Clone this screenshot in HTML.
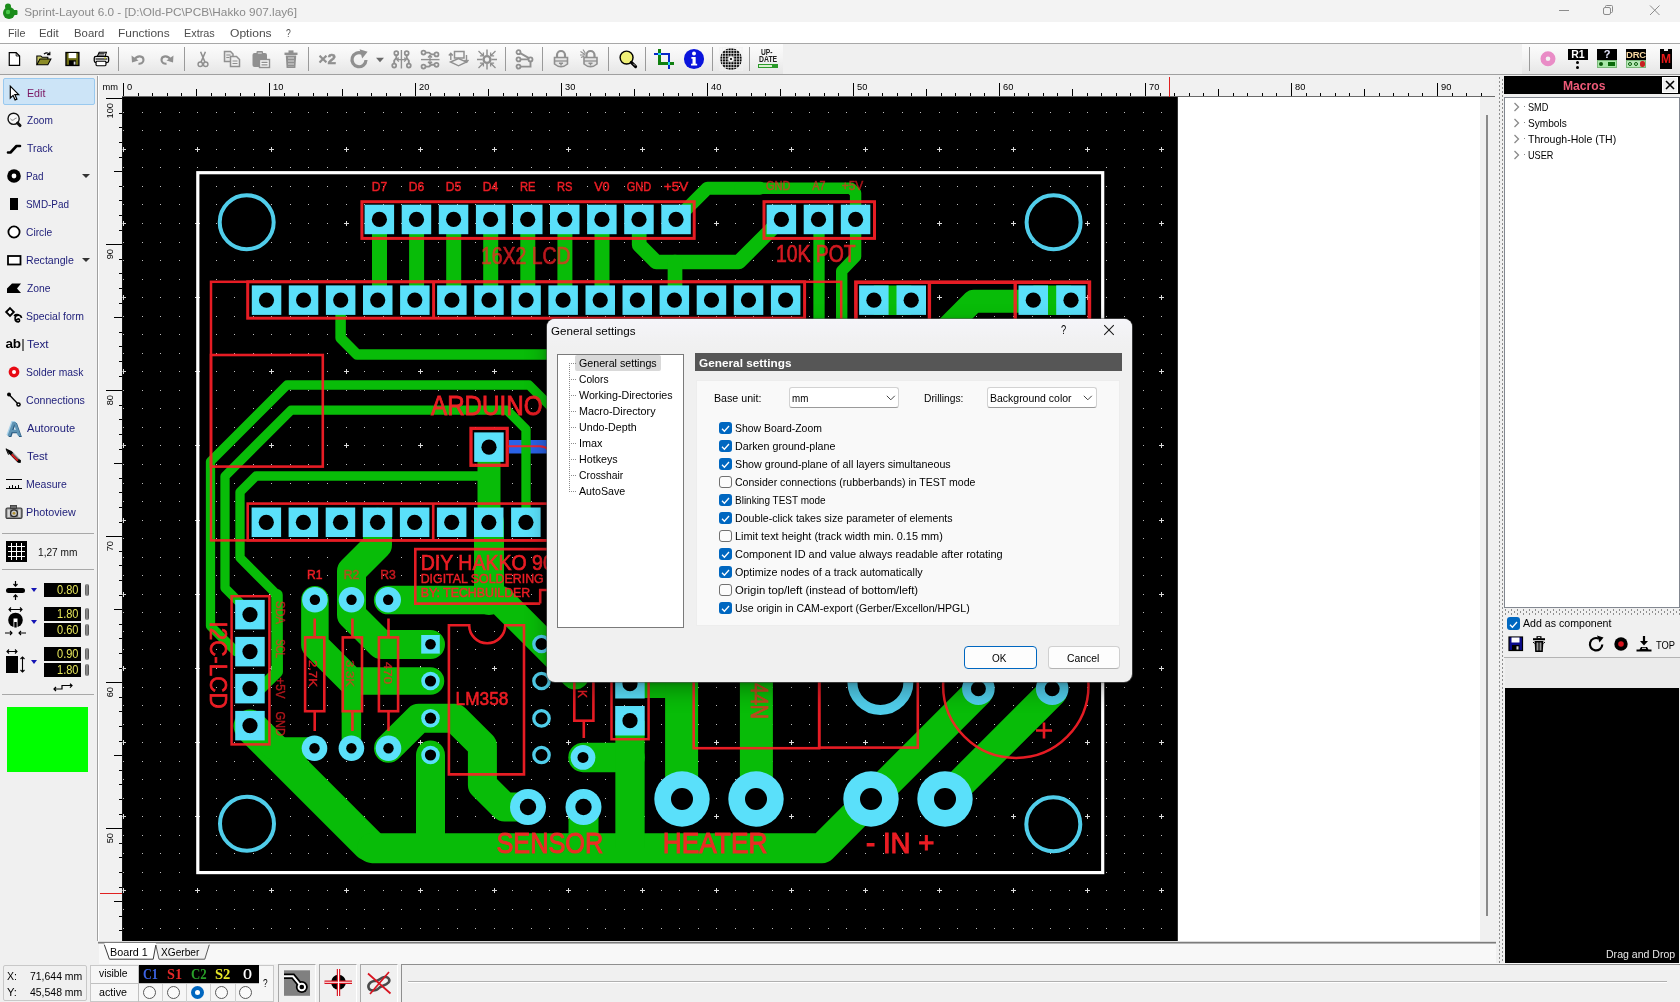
<!DOCTYPE html>
<html><head><meta charset="utf-8"><title>Sprint-Layout</title><style>
html,body{margin:0;padding:0}
body{width:1680px;height:1002px;overflow:hidden;background:#f0f0f0;font-family:"Liberation Sans",sans-serif;position:relative}
.mi{position:absolute;top:25px;font-size:12.4px;color:#505050;line-height:16px;white-space:nowrap}
.li{position:absolute;left:26px;font-size:12px;line-height:16px;white-space:nowrap}
.rl{position:absolute;font-size:9.3px;color:#000;line-height:12px;white-space:nowrap}
.rv{transform-origin:0 0;transform:rotate(-90deg) translate(-100%,0)}
.st{position:absolute;font-size:12px;color:#000;line-height:14px;white-space:nowrap}
.dt{position:absolute;color:#000;line-height:14px;white-space:nowrap}
</style></head><body>
<div id="root" style="position:absolute;left:0;top:0;width:1680px;height:1002px;will-change:transform">
<div style="position:absolute;left:0;top:0;width:1680px;height:22px;background:#f3f3f3"></div>
<div style="position:absolute;left:1px;top:2px;width:18px;height:18px"><svg width="18" height="18" viewBox="0 0 18 18" ><circle cx="8" cy="11" r="6" fill="#1a8c1a"/><circle cx="7" cy="4.5" r="3" fill="#1a8c1a"/><rect x="11" y="8" width="5.5" height="5" rx="1" fill="#1a8c1a"/><circle cx="7" cy="10" r="2.2" fill="#48c848"/></svg></div>
<div style="position:absolute;top:4.5px;font-size:11.8px;line-height:15px;color:#8a8a8a;white-space:nowrap;left:24.2px;">Sprint-Layout 6.0 - [D:\Old-PC\PCB\Hakko 907.lay6]</div>
<svg width="120" height="22" style="position:absolute;left:1555px;top:0" fill="none" stroke="#8c8c8c" stroke-width="1">
<path d="M4 10.5 H14"/>
<rect x="48.5" y="7.5" width="7" height="7" rx="1.5"/><path d="M50.5 7.5 V6.5 Q50.5 5.5 51.5 5.5 H56.5 Q57.5 5.5 57.5 6.5 V11.5 Q57.5 12.5 56.5 12.5 H55.5"/>
<path d="M95 5.5 L104.5 15 M104.5 5.5 L95 15"/>
</svg>
<div style="position:absolute;left:0;top:22px;width:1680px;height:22px;background:#fff"></div>
<div style="position:absolute;top:25.1px;font-size:11.7px;line-height:15px;color:#4e4e4e;white-space:nowrap;left:7.8px;transform:scaleX(0.9230);transform-origin:0 50%;">File</div>
<div style="position:absolute;top:25.1px;font-size:11.7px;line-height:15px;color:#4e4e4e;white-space:nowrap;left:39.3px;transform:scaleX(0.9722);transform-origin:0 50%;">Edit</div>
<div style="position:absolute;top:25.1px;font-size:11.7px;line-height:15px;color:#4e4e4e;white-space:nowrap;left:73.5px;transform:scaleX(0.9706);transform-origin:0 50%;">Board</div>
<div style="position:absolute;top:25.1px;font-size:11.7px;line-height:15px;color:#4e4e4e;white-space:nowrap;left:118.3px;transform:scaleX(1.0193);transform-origin:0 50%;">Functions</div>
<div style="position:absolute;top:25.1px;font-size:11.7px;line-height:15px;color:#4e4e4e;white-space:nowrap;left:184.2px;transform:scaleX(0.9289);transform-origin:0 50%;">Extras</div>
<div style="position:absolute;top:25.1px;font-size:11.7px;line-height:15px;color:#4e4e4e;white-space:nowrap;left:229.5px;transform:scaleX(1.0342);transform-origin:0 50%;">Options</div>
<div style="position:absolute;top:25.1px;font-size:11.7px;line-height:15px;color:#4e4e4e;white-space:nowrap;left:285.6px;transform:scaleX(0.7377);transform-origin:0 50%;">?</div>
<div style="position:absolute;left:0;top:43px;width:1680px;height:1px;background:#a8a8a8"></div>
<div style="position:absolute;left:0;top:44px;width:1680px;height:30px;background:#f0f0f0"></div>
<div style="position:absolute;left:0;top:44px;width:783px;height:30px;background:linear-gradient(#fcfcfc,#f4f4f4 45%,#e6e6e6)"></div>
<div style="position:absolute;left:1522px;top:44px;width:158px;height:30px;background:linear-gradient(#fcfcfc,#f4f4f4 45%,#e6e6e6)"></div>
<div style="position:absolute;left:0;top:74px;width:1680px;height:1px;background:#a0a0a0"></div>
<div style="position:absolute;left:118px;top:47px;width:1px;height:24px;background:#9a9a9a"></div>
<div style="position:absolute;left:184px;top:47px;width:1px;height:24px;background:#9a9a9a"></div>
<div style="position:absolute;left:308px;top:47px;width:1px;height:24px;background:#9a9a9a"></div>
<div style="position:absolute;left:505px;top:47px;width:1px;height:24px;background:#9a9a9a"></div>
<div style="position:absolute;left:542px;top:47px;width:1px;height:24px;background:#9a9a9a"></div>
<div style="position:absolute;left:608px;top:47px;width:1px;height:24px;background:#9a9a9a"></div>
<div style="position:absolute;left:645px;top:47px;width:1px;height:24px;background:#9a9a9a"></div>
<div style="position:absolute;left:712px;top:47px;width:1px;height:24px;background:#9a9a9a"></div>
<div style="position:absolute;left:749px;top:47px;width:1px;height:24px;background:#9a9a9a"></div>
<div style="position:absolute;left:1529px;top:47px;width:1px;height:24px;background:#9a9a9a"></div>
<div style="position:absolute;left:2px;top:46.5px;width:24px;height:24px;transform:scale(0.86)"><svg width="24" height="24" viewBox="0 0 24 24" ><path d="M6.5 4.5 H14.5 L18.5 8.5 V19.5 H6.5 Z" fill="#fff" stroke="#000" stroke-width="1.4"/><path d="M14.5 4.5 V8.5 H18.5" fill="none" stroke="#000" stroke-width="1"/></svg></div>
<div style="position:absolute;left:31px;top:46.5px;width:24px;height:24px;transform:scale(0.88)"><svg width="24" height="24" viewBox="0 0 24 24" ><path d="M5 18.5 V8.5 H9.5 L11 10 H17.5 V12" fill="#c8c864" stroke="#000" stroke-width="1.2"/><path d="M5 18.5 L8.5 12 H21 L17.5 18.5 Z" fill="#8c8c28" stroke="#000" stroke-width="1.2"/><path d="M13 6.5 Q16.5 3.5 19.5 6.5 M19.8 3.8 V7 H16.6" fill="none" stroke="#000" stroke-width="1.2"/></svg></div>
<div style="position:absolute;left:60px;top:46.5px;width:24px;height:24px;transform:scale(0.86)"><svg width="24" height="24" viewBox="0 0 24 24" ><rect x="5" y="4.5" width="15" height="15" fill="#6c6c14" stroke="#000" stroke-width="1.6"/><rect x="8" y="5" width="9" height="6" fill="#fff"/><rect x="8.5" y="13.5" width="8" height="6" fill="#000"/><rect x="14" y="15" width="2" height="3.5" fill="#d8d8d8"/></svg></div>
<div style="position:absolute;left:89px;top:46.5px;width:24px;height:24px;transform:scale(0.9)"><svg width="24" height="24" viewBox="0 0 24 24" ><path d="M8 9 L10 4.5 H18 L16.5 9" fill="#fff" stroke="#000" stroke-width="1.2"/><path d="M9.5 6 H16 M9 7.6 H15.5" stroke="#000" stroke-width="0.9"/><rect x="4.5" y="9" width="16" height="7" rx="2" fill="#e8e8e8" stroke="#000" stroke-width="1.4"/><path d="M6 12 H19" stroke="#000" stroke-width="1.2"/><rect x="6.5" y="14.5" width="11" height="5" rx="1" fill="#fff" stroke="#000" stroke-width="1.3"/><rect x="15.5" y="10.3" width="2" height="1.2" fill="#c8c800"/></svg></div>
<div style="position:absolute;left:126px;top:46.5px;width:24px;height:24px;transform:scale(1)"><svg width="24" height="24" viewBox="0 0 24 24" ><path d="M8.5 12.5 C11 8 17.5 8.5 17.5 13 C17.5 16 14.5 17 12.5 16.6" fill="none" stroke="#909090" stroke-width="2.1"/><path d="M5.5 8.5 L6 15.5 L12.5 13.5 Z" fill="#909090"/></svg></div>
<div style="position:absolute;left:155px;top:46.5px;width:24px;height:24px;transform:scale(1)"><svg width="24" height="24" viewBox="0 0 24 24" ><path d="M15.5 12.5 C13 8 6.5 8.5 6.5 13 C6.5 16 9.5 17 11.5 16.6" fill="none" stroke="#909090" stroke-width="2.1"/><path d="M18.5 8.5 L18 15.5 L11.5 13.5 Z" fill="#909090"/></svg></div>
<div style="position:absolute;left:191px;top:46.5px;width:24px;height:24px;transform:scale(0.9)"><svg width="24" height="24" viewBox="0 0 24 24" ><path d="M9.3 4 L14.2 15.5 M14.7 4 L9.8 15.5" stroke="#909090" stroke-width="1.7" fill="none"/><circle cx="9" cy="17.8" r="2.5" fill="none" stroke="#909090" stroke-width="1.6"/><circle cx="15" cy="17.8" r="2.5" fill="none" stroke="#909090" stroke-width="1.6"/></svg></div>
<div style="position:absolute;left:220px;top:46.5px;width:24px;height:24px;transform:scale(1)"><svg width="24" height="24" viewBox="0 0 24 24" ><path d="M4.5 4.5 H10.5 L13 7 V14.5 H4.5 Z" fill="#e8e8e8" stroke="#909090" stroke-width="1.5"/><path d="M10.5 9.5 H16.5 L19.5 12.5 V19.5 H10.5 Z" fill="#efefef" stroke="#909090" stroke-width="1.5"/><path d="M6.3 8 H10.5 M6.3 10.5 H9.5 M12.5 14 H17.5 M12.5 16.5 H17.5" stroke="#909090" stroke-width="1.2"/></svg></div>
<div style="position:absolute;left:249px;top:46.5px;width:24px;height:24px;transform:scale(1)"><svg width="24" height="24" viewBox="0 0 24 24" ><rect x="3.5" y="6" width="14.5" height="14" rx="2" fill="#909090"/><rect x="7.5" y="4" width="6.5" height="3.6" rx="1" fill="#909090"/><rect x="8.8" y="5.6" width="4" height="1" fill="#e8e8e8"/><rect x="10.5" y="12.5" width="10" height="8" fill="#f4f4f4" stroke="#909090" stroke-width="1.4"/><path d="M12.5 15.3 H18.5 M12.5 17.8 H18.5" stroke="#909090" stroke-width="1.2"/></svg></div>
<div style="position:absolute;left:279px;top:46.5px;width:24px;height:24px;transform:scale(1)"><svg width="24" height="24" viewBox="0 0 24 24" ><path d="M6.8 8.5 H17.2 L16.4 21 H7.6 Z" fill="#909090"/><rect x="5.5" y="5.6" width="13" height="2.4" fill="#909090"/><rect x="9.5" y="3.4" width="5" height="2.6" fill="#909090"/><path d="M10 10 V19.5 M12 10 V19.5 M14 10 V19.5" stroke="#e4e4e4" stroke-width="0.9" stroke-dasharray="2 1"/></svg></div>
<div style="position:absolute;left:315px;top:46.5px;width:24px;height:24px;transform:scale(1)"><svg width="24" height="24" viewBox="0 0 24 24" ><text x="12.3" y="17.2" text-anchor="middle" font-family="Liberation Sans, sans-serif" font-weight="bold" font-size="15.5" fill="#909090" stroke="#909090" stroke-width="0.5" textLength="17.5" lengthAdjust="spacingAndGlyphs">&#215;2</text></svg></div>
<div style="position:absolute;left:347px;top:46.5px;width:24px;height:24px;transform:scale(1)"><svg width="24" height="24" viewBox="0 0 24 24" ><path d="M19 13 A7 7 0 1 1 15 6.4" fill="none" stroke="#909090" stroke-width="3.2"/><path d="M12.6 2.2 L20.6 4.8 L15.2 11.4 Z" fill="#909090"/></svg></div>
<div style="position:absolute;left:368px;top:46.5px;width:24px;height:24px;transform:scale(1)"><svg width="24" height="24" viewBox="0 0 24 24" ><path d="M8 10.8 H16 L12 15.2 Z" fill="#6a6a6a"/></svg></div>
<div style="position:absolute;left:389px;top:46.5px;width:24px;height:24px;transform:scale(1)"><svg width="24" height="24" viewBox="0 0 24 24" ><path d="M12.4 3 V21.5" stroke="#909090" stroke-width="1.4"/><circle cx="7.3" cy="6.2" r="2" fill="none" stroke="#909090" stroke-width="1.7"/><circle cx="5.2" cy="18.6" r="2" fill="none" stroke="#909090" stroke-width="1.7"/><path d="M7.3 8.2 V11 L5.2 13.5 V16.6" fill="none" stroke="#909090" stroke-width="1.9"/><circle cx="17.7" cy="6.2" r="2" fill="none" stroke="#909090" stroke-width="1.7"/><circle cx="19.8" cy="18.6" r="2" fill="none" stroke="#909090" stroke-width="1.7"/><path d="M17.7 8.2 V11 L19.8 13.5 V16.6" fill="none" stroke="#909090" stroke-width="1.9"/><path d="M8 12.6 H17 M9.8 10.6 L7.8 12.6 L9.8 14.6 M15.2 10.6 L17.2 12.6 L15.2 14.6" fill="none" stroke="#909090" stroke-width="1.3"/></svg></div>
<div style="position:absolute;left:418px;top:46.5px;width:24px;height:24px;transform:scale(1)"><svg width="24" height="24" viewBox="0 0 24 24" ><path d="M3 12.6 H21.5" stroke="#909090" stroke-width="1.4"/><circle cx="5.5" cy="5.6" r="2" fill="none" stroke="#909090" stroke-width="1.7"/><circle cx="18.5" cy="7.4" r="2" fill="none" stroke="#909090" stroke-width="1.7"/><path d="M7.5 5.6 H11 L13.5 7.4 H16.5" fill="none" stroke="#909090" stroke-width="1.9"/><circle cx="5.5" cy="19.6" r="2" fill="none" stroke="#909090" stroke-width="1.7"/><circle cx="18.5" cy="17.8" r="2" fill="none" stroke="#909090" stroke-width="1.7"/><path d="M7.5 19.6 H11 L13.5 17.8 H16.5" fill="none" stroke="#909090" stroke-width="1.9"/><path d="M12 8.5 V16.8 M10 10.5 L12 8.3 L14 10.5 M10 14.8 L12 17 L14 14.8" fill="none" stroke="#909090" stroke-width="1.3"/></svg></div>
<div style="position:absolute;left:446px;top:46.5px;width:24px;height:24px;transform:scale(1)"><svg width="24" height="24" viewBox="0 0 24 24" ><rect x="8.5" y="4.5" width="9.5" height="6.5" fill="none" stroke="#909090" stroke-width="1.5"/><path d="M4.5 15 L12.5 11.5 L20.5 15 L12.5 18.8 Z" fill="none" stroke="#909090" stroke-width="1.4"/><path d="M4.8 6.5 V13 M2.8 8.5 L4.8 6.3 L6.8 8.5 M20.5 8 V15 M18.5 13 L20.5 15.2 L22.5 13" fill="none" stroke="#909090" stroke-width="1.4"/></svg></div>
<div style="position:absolute;left:475px;top:46.5px;width:24px;height:24px;transform:scale(1)"><svg width="24" height="24" viewBox="0 0 24 24" ><circle cx="12" cy="12.5" r="3.4" fill="none" stroke="#909090" stroke-width="2.4"/><path d="M12 2.5 V8 M12 17 V22.5 M2 12.5 H7.5 M16.5 12.5 H22" stroke="#909090" stroke-width="1.5"/><path d="M3.5 4 L8.2 8.7 M8.4 5.4 V8.9 H4.9 M20.5 4 L15.8 8.7 M15.6 5.4 V8.9 H19.1 M3.5 21 L8.2 16.3 M4.9 16.1 H8.4 V19.6 M20.5 21 L15.8 16.3 M19.1 16.1 H15.6 V19.6" fill="none" stroke="#909090" stroke-width="1.3"/></svg></div>
<div style="position:absolute;left:512px;top:46.5px;width:24px;height:24px;transform:scale(1)"><svg width="24" height="24" viewBox="0 0 24 24" ><circle cx="6.5" cy="5.2" r="2" fill="none" stroke="#909090" stroke-width="1.8"/><circle cx="6.5" cy="12.4" r="2" fill="none" stroke="#909090" stroke-width="1.8"/><circle cx="6.5" cy="19.6" r="2" fill="none" stroke="#909090" stroke-width="1.8"/><circle cx="18.5" cy="12.4" r="2" fill="none" stroke="#909090" stroke-width="1.8"/><path d="M8.5 12.4 H16.5 M8.2 6.2 L17 11.2 M8.5 19.6 H18.5 V14.4" fill="none" stroke="#909090" stroke-width="1.9"/></svg></div>
<div style="position:absolute;left:549px;top:46.5px;width:24px;height:24px;transform:scale(1)"><svg width="24" height="24" viewBox="0 0 24 24" ><path d="M8 10.5 V8 A4 4 0 0 1 16 8 V10.5" fill="none" stroke="#909090" stroke-width="2.2"/><path d="M5.5 10.5 H18.5 V17 Q12 22.5 5.5 17 Z" fill="#e4e4e4" stroke="#909090" stroke-width="1.6"/><path d="M5.5 14 H18.5" stroke="#909090" stroke-width="1.3"/><path d="M10 16.2 H14 M12 16.2 V18.6" stroke="#909090" stroke-width="1.5"/></svg></div>
<div style="position:absolute;left:578px;top:46.5px;width:24px;height:24px;transform:scale(1)"><svg width="24" height="24" viewBox="0 0 24 24" ><path d="M8.5 10.5 V8 A4 4 0 0 1 16.5 8 V10.5" fill="none" stroke="#909090" stroke-width="2.2"/><path d="M6 10.5 H19 V17 Q12.5 22.5 6 17 Z" fill="#e4e4e4" stroke="#909090" stroke-width="1.6"/><path d="M6 14 H19" stroke="#909090" stroke-width="1.3"/><path d="M10.5 16.2 H14.5 M12.5 16.2 V18.6" stroke="#909090" stroke-width="1.5"/><path d="M2.5 4.5 L7 7.5 M2 8 H6.5 M5 2.5 L7.5 6.5 M3 10.5 L6.5 9" stroke="#909090" stroke-width="1.1"/></svg></div>
<div style="position:absolute;left:616px;top:46.5px;width:24px;height:24px;transform:scale(0.95)"><svg width="24" height="24" viewBox="0 0 24 24" ><circle cx="10.5" cy="10.5" r="6.8" fill="#f0f078" stroke="#000" stroke-width="1.5"/><path d="M15.5 15.5 L20 20" stroke="#000" stroke-width="3.2" stroke-linecap="round"/><path d="M17.5 17 L19.5 19" stroke="#fff" stroke-width="0.8"/></svg></div>
<div style="position:absolute;left:652px;top:46.5px;width:24px;height:24px;transform:scale(1.07)"><svg width="24" height="24" viewBox="0 0 24 24" shape-rendering="crispEdges"><path d="M8 2.5 V16 H21" fill="none" stroke="#108010" stroke-width="2.4"/><path d="M3 7.5 H16.5 V21.5" fill="none" stroke="#0828c8" stroke-width="2.4"/><rect x="6.8" y="6.3" width="2.4" height="2.4" fill="#28d8f8"/><rect x="15.3" y="14.8" width="2.4" height="2.4" fill="#28d8f8"/></svg></div>
<div style="position:absolute;left:682px;top:46.5px;width:24px;height:24px;transform:scale(1.05)"><svg width="24" height="24" viewBox="0 0 24 24" ><circle cx="12" cy="12" r="9.6" fill="#0a14dc"/><circle cx="12" cy="6.8" r="1.9" fill="#fff"/><path d="M9.5 10 H13.6 V16.5 H15 V18.2 H9.2 V16.5 H10.6 V11.7 H9.5 Z" fill="#fff"/></svg></div>
<div style="position:absolute;left:719px;top:46.5px;width:24px;height:24px;transform:scale(1.08)"><svg width="24" height="24" viewBox="0 0 24 24" ><circle cx="12" cy="12" r="10" fill="#000"/><path d="M1.6 1 V23 M1 1.6 H23" stroke="#f0f0f0" stroke-width="0.7"/><path d="M4.2 1 V23 M1 4.2 H23" stroke="#f0f0f0" stroke-width="0.7"/><path d="M6.8 1 V23 M1 6.8 H23" stroke="#f0f0f0" stroke-width="0.7"/><path d="M9.4 1 V23 M1 9.4 H23" stroke="#f0f0f0" stroke-width="0.7"/><path d="M12.0 1 V23 M1 12.0 H23" stroke="#f0f0f0" stroke-width="0.7"/><path d="M14.6 1 V23 M1 14.6 H23" stroke="#f0f0f0" stroke-width="0.7"/><path d="M17.2 1 V23 M1 17.2 H23" stroke="#f0f0f0" stroke-width="0.7"/><path d="M19.8 1 V23 M1 19.8 H23" stroke="#f0f0f0" stroke-width="0.7"/><path d="M22.4 1 V23 M1 22.4 H23" stroke="#f0f0f0" stroke-width="0.7"/><circle cx="12" cy="12" r="2.6" fill="#f0f0f0"/><circle cx="12" cy="12" r="1" fill="#000"/></svg></div>
<div style="position:absolute;left:756px;top:46.5px;width:24px;height:24px;transform:scale(1)"><div style="position:relative;width:24px;height:24px"><div style="position:absolute;left:5.3px;top:1.2px;font:bold 8.6px 'Liberation Sans',sans-serif;line-height:9px;color:#222;transform:scaleX(0.78);transform-origin:0 0;white-space:nowrap">UP-</div><div style="position:absolute;left:2.6px;top:8.2px;font:bold 8.6px 'Liberation Sans',sans-serif;line-height:9px;color:#222;transform:scaleX(0.80);transform-origin:0 0;white-space:nowrap">DATE</div><div style="position:absolute;left:1.7px;top:17.4px;width:20.4px;height:4.4px;background:#2a9a2a"></div><div style="position:absolute;left:3px;top:18.5px;width:13px;height:2.2px;background:#d8f0d0"></div></div></div>
<div style="position:absolute;left:1536px;top:46.5px;width:24px;height:24px;transform:scale(1)"><svg width="24" height="24" viewBox="0 0 24 24" ><circle cx="12" cy="11.8" r="4.9" fill="none" stroke="#e98cc6" stroke-width="5.2"/></svg></div>
<div style="position:absolute;left:1566px;top:46.5px;width:24px;height:24px;transform:scale(1)"><div style="position:relative;width:24px;height:24px"><div style="position:absolute;left:2px;top:2px;width:20px;height:11px;background:#000;color:#fff;font:bold 10.5px 'Liberation Sans',sans-serif;line-height:11px;text-align:center">R1</div><div style="position:absolute;left:10px;top:14px;width:3px;height:3px;border-radius:50%;background:#000"></div><div style="position:absolute;left:10px;top:19px;width:3px;height:3px;border-radius:50%;background:#000"></div></div></div>
<div style="position:absolute;left:1595px;top:46.5px;width:24px;height:24px;transform:scale(1)"><div style="position:relative;width:24px;height:24px"><div style="position:absolute;left:2px;top:2px;width:20px;height:11px;background:#000;color:#e8e8ff;font:bold 11px 'Liberation Sans',sans-serif;line-height:11px;text-align:center">?</div><div style="position:absolute;left:2px;top:13px;width:20px;height:8px;background:#a8e8a8;box-sizing:border-box;border:1px solid #7ab87a"></div><div style="position:absolute;left:4px;top:15px;width:4px;height:4px;border-radius:50%;background:#0a5a0a"></div><div style="position:absolute;left:13px;top:15px;width:7px;height:4px;background:#0a6a0a"></div></div></div>
<div style="position:absolute;left:1624px;top:46.5px;width:24px;height:24px;transform:scale(1)"><div style="position:relative;width:24px;height:24px"><div style="position:absolute;left:2px;top:2px;width:20px;height:11px;background:#000;color:#f8d8a0;font:bold 9.5px 'Liberation Sans',sans-serif;line-height:11px;text-align:center;letter-spacing:-0.2px">DRC</div><div style="position:absolute;left:2px;top:13px;width:20px;height:8px;background:#b8eab8;box-sizing:border-box;border:1px solid #7ab87a"></div><div style="position:absolute;left:4px;top:15px;width:4px;height:4px;border-radius:50%;border:1px solid #0a5a0a;box-sizing:border-box"></div><div style="position:absolute;left:10px;top:15px;width:4px;height:4px;border-radius:50%;border:1px solid #0a5a0a;box-sizing:border-box"></div><div style="position:absolute;left:16px;top:14px;width:5px;height:6px;background:#c82020;border-radius:2px"></div></div></div>
<div style="position:absolute;left:1655px;top:46.5px;width:24px;height:24px;transform:scale(1)"><div style="position:relative;width:24px;height:24px"><div style="position:absolute;left:5px;top:2px;width:12px;height:20px;background:#000;color:#e81818;font:bold 12px 'Liberation Sans',sans-serif;line-height:21px;text-align:center">M</div><div style="position:absolute;left:9px;top:2px;width:4px;height:2px;background:#f0f0f0"></div></div></div>
<div style="position:absolute;left:0;top:75px;width:97px;height:889px;background:#f0f0f0"></div>
<div style="position:absolute;left:97px;top:76px;width:1px;height:865px;background:#a0a0a0"></div>
<div style="position:absolute;left:98px;top:75px;width:1px;height:866px;background:#fff"></div>
<div style="position:absolute;left:3px;top:78px;width:92px;height:27px;background:#cce4f7;border:1px solid #99c9ef;border-radius:2px;box-sizing:border-box"></div>
<div style="position:absolute;top:85.6px;font-size:11.8px;line-height:15px;color:#7a1460;white-space:nowrap;left:26.7px;transform:scaleX(0.9049);transform-origin:0 50%;">Edit</div>
<div style="position:absolute;left:4px;top:82px;width:20px;height:20px"><svg width="20" height="20" viewBox="0 0 20 20" ><path d="M6.3 4.2 V16 L9.1 13.4 L11.1 17.9 L12.9 17.1 L10.9 12.7 H14.7 Z" fill="#fff" stroke="#000" stroke-width="1.2" stroke-linejoin="miter"/></svg></div>
<div style="position:absolute;top:112.6px;font-size:11.8px;line-height:15px;color:#1c1c78;white-space:nowrap;left:26.8px;transform:scaleX(0.8554);transform-origin:0 50%;">Zoom</div>
<div style="position:absolute;left:4px;top:110px;width:20px;height:20px"><svg width="20" height="20" viewBox="0 0 20 20" ><circle cx="9.6" cy="8.8" r="5.6" fill="#f8f8f8" stroke="#111" stroke-width="1.4"/><path d="M6.4 8.8 Q8 11.4 9.6 9.8 T12.6 8" fill="none" stroke="#888" stroke-width="1"/><path d="M13.6 13 L16 15.6" stroke="#111" stroke-width="3" stroke-linecap="round"/></svg></div>
<div style="position:absolute;top:140.6px;font-size:11.8px;line-height:15px;color:#1c1c78;white-space:nowrap;left:26.8px;transform:scaleX(0.8878);transform-origin:0 50%;">Track</div>
<div style="position:absolute;left:4px;top:138px;width:20px;height:20px"><svg width="20" height="20" viewBox="0 0 20 20" ><path d="M4 14.5 H6.5 L12.5 8 H16" fill="none" stroke="#000" stroke-width="2.6" stroke-linecap="round" stroke-linejoin="round"/></svg></div>
<div style="position:absolute;top:168.6px;font-size:11.8px;line-height:15px;color:#1c1c78;white-space:nowrap;left:26.4px;transform:scaleX(0.8383);transform-origin:0 50%;">Pad</div>
<div style="position:absolute;left:4px;top:166px;width:20px;height:20px"><svg width="20" height="20" viewBox="0 0 20 20" ><circle cx="10" cy="10" r="6.8" fill="#000"/><circle cx="10" cy="10" r="2.4" fill="#fff"/></svg></div>
<div style="position:absolute;top:196.6px;font-size:11.8px;line-height:15px;color:#1c1c78;white-space:nowrap;left:26.4px;transform:scaleX(0.8407);transform-origin:0 50%;">SMD-Pad</div>
<div style="position:absolute;left:4px;top:194px;width:20px;height:20px"><svg width="20" height="20" viewBox="0 0 20 20" ><rect x="6" y="4" width="8" height="12" fill="#000"/></svg></div>
<div style="position:absolute;top:224.6px;font-size:11.8px;line-height:15px;color:#1c1c78;white-space:nowrap;left:26.4px;transform:scaleX(0.8688);transform-origin:0 50%;">Circle</div>
<div style="position:absolute;left:4px;top:222px;width:20px;height:20px"><svg width="20" height="20" viewBox="0 0 20 20" ><circle cx="10" cy="10" r="5.6" fill="#fff" stroke="#000" stroke-width="1.8"/></svg></div>
<div style="position:absolute;top:252.6px;font-size:11.8px;line-height:15px;color:#1c1c78;white-space:nowrap;left:26.4px;transform:scaleX(0.9015);transform-origin:0 50%;">Rectangle</div>
<div style="position:absolute;left:4px;top:250px;width:20px;height:20px"><svg width="20" height="20" viewBox="0 0 20 20" ><rect x="4" y="6" width="12.5" height="8.5" fill="#fff" stroke="#000" stroke-width="1.8"/></svg></div>
<div style="position:absolute;top:280.6px;font-size:11.8px;line-height:15px;color:#1c1c78;white-space:nowrap;left:26.8px;transform:scaleX(0.8738);transform-origin:0 50%;">Zone</div>
<div style="position:absolute;left:4px;top:278px;width:20px;height:20px"><svg width="20" height="20" viewBox="0 0 20 20" ><path d="M3 15 V10.5 L8 5.5 H17 L13 10.5 L17 15 Z" fill="#000"/></svg></div>
<div style="position:absolute;top:308.6px;font-size:11.8px;line-height:15px;color:#1c1c78;white-space:nowrap;left:26.4px;transform:scaleX(0.8845);transform-origin:0 50%;">Special form</div>
<div style="position:absolute;left:4px;top:306px;width:20px;height:20px"><svg width="20" height="20" viewBox="0 0 20 20" ><path d="M6 2.2 L9.8 6 L6 9.8 L2.2 6 Z" fill="#fff" stroke="#000" stroke-width="1.9"/><path d="M12.6 14.6 A1.5 1.5 0 1 1 14.4 15.9 A3.3 3.3 0 1 1 17.6 12 A4.6 4.6 0 0 0 10 9.8" fill="none" stroke="#000" stroke-width="1.6"/></svg></div>
<div style="position:absolute;top:336.6px;font-size:11.8px;line-height:15px;color:#1c1c78;white-space:nowrap;left:27.0px;">Text</div>
<div style="position:absolute;left:4px;top:334px;width:20px;height:20px"><div style="position:absolute;left:1.5px;top:1px;font:bold 13.5px 'Liberation Sans',sans-serif;color:#000;line-height:18px;white-space:nowrap;letter-spacing:-0.3px">ab<span style="font-weight:normal;margin-left:0.5px">|</span></div></div>
<div style="position:absolute;top:364.6px;font-size:11.8px;line-height:15px;color:#1c1c78;white-space:nowrap;left:26.4px;transform:scaleX(0.8738);transform-origin:0 50%;">Solder mask</div>
<div style="position:absolute;left:4px;top:362px;width:20px;height:20px"><svg width="20" height="20" viewBox="0 0 20 20" ><circle cx="10" cy="10" r="5.4" fill="#e80a14"/><circle cx="10" cy="10" r="2" fill="#fff"/></svg></div>
<div style="position:absolute;top:392.6px;font-size:11.8px;line-height:15px;color:#1c1c78;white-space:nowrap;left:26.4px;transform:scaleX(0.8980);transform-origin:0 50%;">Connections</div>
<div style="position:absolute;left:4px;top:390px;width:20px;height:20px"><svg width="20" height="20" viewBox="0 0 20 20" ><path d="M5 4.5 L14.5 14.5" stroke="#000" stroke-width="1.3"/><circle cx="5" cy="4.5" r="2" fill="#000"/><circle cx="14.5" cy="14.5" r="2.3" fill="#000"/><circle cx="14.5" cy="14.5" r="0.8" fill="#fff"/></svg></div>
<div style="position:absolute;top:420.6px;font-size:11.8px;line-height:15px;color:#1c1c78;white-space:nowrap;left:27.0px;transform:scaleX(0.9420);transform-origin:0 50%;">Autoroute</div>
<div style="position:absolute;left:4px;top:418px;width:20px;height:20px"><div style="position:absolute;left:2.5px;top:-1.5px;font:bold 21px 'Liberation Sans',sans-serif;color:#5f94b4;line-height:24px;text-shadow:1px 1px 0 #2a5a80,-1px -1px 0 #a8d0e8;transform:scaleX(0.95);transform-origin:0 0">A</div></div>
<div style="position:absolute;top:448.6px;font-size:11.8px;line-height:15px;color:#1c1c78;white-space:nowrap;left:27.0px;transform:scaleX(0.9566);transform-origin:0 50%;">Test</div>
<div style="position:absolute;left:4px;top:446px;width:20px;height:20px"><svg width="20" height="20" viewBox="0 0 20 20" ><path d="M2 2.6 L7.5 5 L17 14.4 L16.6 17 L14 16.8 L4.8 7.6 Z" fill="#000"/><path d="M7.6 8.4 L13.8 14.6" stroke="#e02020" stroke-width="1.8"/><path d="M8.8 7.2 L15 13.4" stroke="#fff" stroke-width="0.9"/><path d="M2 2.6 L4.6 8.6" stroke="#000" stroke-width="1.1"/></svg></div>
<div style="position:absolute;top:476.6px;font-size:11.8px;line-height:15px;color:#1c1c78;white-space:nowrap;left:26.4px;transform:scaleX(0.8888);transform-origin:0 50%;">Measure</div>
<div style="position:absolute;left:4px;top:474px;width:20px;height:20px"><svg width="20" height="20" viewBox="0 0 20 20" shape-rendering="crispEdges"><path d="M2 5.5 H18 M2 14.5 H18" stroke="#000" stroke-width="1.4"/><path d="M5 14.5 V12 M8 14.5 V11 M11 14.5 V12 M14 14.5 V11" stroke="#000" stroke-width="1"/></svg></div>
<div style="position:absolute;top:504.6px;font-size:11.8px;line-height:15px;color:#1c1c78;white-space:nowrap;left:26.4px;transform:scaleX(0.9129);transform-origin:0 50%;">Photoview</div>
<div style="position:absolute;left:4px;top:502px;width:20px;height:20px"><svg width="20" height="20" viewBox="0 0 20 20" ><rect x="2" y="6" width="16" height="10.5" rx="1.5" fill="#8a8a8a" stroke="#3c3c3c" stroke-width="1.2"/><rect x="6.5" y="3.5" width="6" height="3" fill="#6a6a6a" stroke="#3c3c3c" stroke-width="0.9"/><circle cx="10" cy="11.3" r="3.4" fill="#c8c8c8" stroke="#2a2a2a" stroke-width="1.3"/><circle cx="10" cy="11.3" r="1.4" fill="#b09030"/><rect x="3.5" y="7.5" width="2.4" height="7.5" fill="#d8d8d8"/><rect x="14.2" y="7.5" width="2.4" height="7.5" fill="#d8d8d8"/></svg></div>
<div style="position:absolute;left:82px;top:174px;width:0;height:0;border-left:4px solid transparent;border-right:4px solid transparent;border-top:4px solid #333"></div>
<div style="position:absolute;left:82px;top:258px;width:0;height:0;border-left:4px solid transparent;border-right:4px solid transparent;border-top:4px solid #333"></div>
<div style="position:absolute;left:2px;top:533px;width:92px;height:1px;background:#a8a8a8"></div>
<div style="position:absolute;left:2px;top:569px;width:92px;height:1px;background:#a8a8a8"></div>
<div style="position:absolute;left:2px;top:694px;width:92px;height:1px;background:#a8a8a8"></div>
<div style="position:absolute;left:6px;top:541px;width:21px;height:21px"><svg width="21" height="21" viewBox="0 0 21 21" shape-rendering="crispEdges"><rect width="21" height="21" fill="#000"/><path d="M5.5 2 V19 M10.5 2 V19 M15.5 2 V19 M2 5.5 H19 M2 10.5 H19 M2 15.5 H19" stroke="#fff" stroke-width="1"/></svg></div>
<div style="position:absolute;top:544.1px;font-size:11.6px;line-height:15px;color:#111;white-space:nowrap;left:37.7px;transform:scaleX(0.8754);transform-origin:0 50%;">1,27 mm</div>
<div style="position:absolute;left:44px;top:583px;width:37px;height:14px;background:#000"></div>
<div style="position:absolute;top:582.2px;font-size:12.2px;line-height:16px;color:#e6e65a;white-space:nowrap;left:57.0px;transform:scaleX(0.9056);transform-origin:0 50%;">0.80</div>
<div style="position:absolute;left:85px;top:584px;width:4px;height:12px;background:linear-gradient(90deg,#555,#999 50%,#444);border-radius:2px"></div>
<div style="position:absolute;left:44px;top:607px;width:37px;height:14px;background:#000"></div>
<div style="position:absolute;top:606.2px;font-size:12.2px;line-height:16px;color:#e6e65a;white-space:nowrap;left:57.0px;transform:scaleX(0.9056);transform-origin:0 50%;">1.80</div>
<div style="position:absolute;left:85px;top:608px;width:4px;height:12px;background:linear-gradient(90deg,#555,#999 50%,#444);border-radius:2px"></div>
<div style="position:absolute;left:44px;top:623px;width:37px;height:14px;background:#000"></div>
<div style="position:absolute;top:622.2px;font-size:12.2px;line-height:16px;color:#e6e65a;white-space:nowrap;left:57.0px;transform:scaleX(0.9056);transform-origin:0 50%;">0.60</div>
<div style="position:absolute;left:85px;top:624px;width:4px;height:12px;background:linear-gradient(90deg,#555,#999 50%,#444);border-radius:2px"></div>
<div style="position:absolute;left:44px;top:647px;width:37px;height:14px;background:#000"></div>
<div style="position:absolute;top:646.2px;font-size:12.2px;line-height:16px;color:#e6e65a;white-space:nowrap;left:57.0px;transform:scaleX(0.9056);transform-origin:0 50%;">0.90</div>
<div style="position:absolute;left:85px;top:648px;width:4px;height:12px;background:linear-gradient(90deg,#555,#999 50%,#444);border-radius:2px"></div>
<div style="position:absolute;left:44px;top:663px;width:37px;height:14px;background:#000"></div>
<div style="position:absolute;top:662.2px;font-size:12.2px;line-height:16px;color:#e6e65a;white-space:nowrap;left:57.0px;transform:scaleX(0.9056);transform-origin:0 50%;">1.80</div>
<div style="position:absolute;left:85px;top:664px;width:4px;height:12px;background:linear-gradient(90deg,#555,#999 50%,#444);border-radius:2px"></div>
<div style="position:absolute;left:31px;top:588px;width:0;height:0;border-left:3.5px solid transparent;border-right:3.5px solid transparent;border-top:4px solid #1414b4"></div>
<div style="position:absolute;left:31px;top:620px;width:0;height:0;border-left:3.5px solid transparent;border-right:3.5px solid transparent;border-top:4px solid #1414b4"></div>
<div style="position:absolute;left:31px;top:660px;width:0;height:0;border-left:3.5px solid transparent;border-right:3.5px solid transparent;border-top:4px solid #1414b4"></div>
<div style="position:absolute;left:5px;top:580px;width:22px;height:20px"><svg width="22" height="20" viewBox="0 0 22 20" ><rect x="1" y="8" width="19" height="5" rx="2.5" fill="#000"/><path d="M10.5 1 V6 M8.5 4 L10.5 6.2 L12.5 4 M10.5 20 V15 M8.5 17 L10.5 14.8 L12.5 17" fill="none" stroke="#000" stroke-width="1.2"/></svg></div>
<div style="position:absolute;left:4px;top:606px;width:24px;height:32px"><svg width="24" height="32" viewBox="0 0 24 32" ><path d="M5 3.5 H18 M7 1.5 L5 3.5 L7 5.5 M16 1.5 L18 3.5 L16 5.5" fill="none" stroke="#000" stroke-width="1.1"/><circle cx="11.5" cy="14" r="7.3" fill="#000"/><rect x="9.5" y="12.5" width="4" height="9" fill="#fff"/><rect x="10.3" y="16" width="2.4" height="5.5" fill="#000"/><path d="M1 27 H8 M6 25 L8 27 L6 29 M22 27 H15 M17 25 L15 27 L17 29" fill="none" stroke="#000" stroke-width="1.1"/></svg></div>
<div style="position:absolute;left:5px;top:648px;width:22px;height:28px"><svg width="22" height="28" viewBox="0 0 22 28" ><path d="M2 3.5 H12 M4 1.5 L2 3.5 L4 5.5 M10 1.5 L12 3.5 L10 5.5" fill="none" stroke="#000" stroke-width="1.1"/><rect x="1" y="8" width="12" height="17" fill="#000"/><path d="M17.5 9 V24 M15.5 11 L17.5 9 L19.5 11 M15.5 22 L17.5 24 L19.5 22" fill="none" stroke="#000" stroke-width="1.1"/></svg></div>
<div style="position:absolute;left:52px;top:679px;width:22px;height:10px"><svg width="22" height="10" viewBox="0 0 22 10" ><path d="M2 6 H10 V2.5 H20 M4 4 L2 6 L4 8 M18 0.8 L20 2.6 L18 4.6" fill="none" stroke="#000" stroke-width="1.2"/></svg></div>
<div style="position:absolute;left:7px;top:707px;width:81px;height:65px;background:#00ff00"></div>
<div style="position:absolute;left:1178px;top:97px;width:302px;height:844px;background:#fff"></div>
<div style="position:absolute;left:1480px;top:97px;width:16px;height:844px;background:#f0f0f0"></div>
<div style="position:absolute;left:1486px;top:115px;width:2px;height:801px;background:#8a8a8a"></div>
<div style="position:absolute;left:98px;top:941px;width:1398px;height:3px;background:linear-gradient(#dcdcdc 33%,#7c7c7c 33%,#7c7c7c 67%,#b4b4b4 67%)"></div>
<div style="position:absolute;left:99px;top:944px;width:1397px;height:20px;background:#f8f8f8"></div>
<div style="position:absolute;left:1496px;top:75px;width:8px;height:888px;background:#f0f0f0"></div>
<div style="position:absolute;left:1498px;top:77px;width:6px;height:886px;background-image:radial-gradient(circle at 1.5px 1px,#8e8e8e 0.55px,transparent 0.95px),radial-gradient(circle at 4.5px 3px,#8e8e8e 0.55px,transparent 0.95px);background-size:6px 4px"></div>
<div style="position:absolute;left:1504px;top:75px;width:176px;height:888px;background:#f0f0f0"></div>
<div style="position:absolute;left:1504px;top:76px;width:176px;height:18px;background:#000"></div>
<div style="position:absolute;top:77.1px;font-size:12.8px;line-height:17px;color:#ee5a78;white-space:nowrap;font-weight:bold;left:1562.8px;transform:scaleX(0.9483);transform-origin:0 50%;">Macros</div>
<div style="position:absolute;left:1662px;top:77px;width:16px;height:16px;background:#f0f0f0;border:1px solid #fff;box-sizing:border-box"><svg width="14" height="14" stroke="#000" stroke-width="1.6"><path d="M3 3 L11 11 M11 3 L3 11"/></svg></div>
<div style="position:absolute;left:1504px;top:97px;width:176px;height:511px;background:#fff;border:1px solid #828790;box-sizing:border-box"></div>
<div style="position:absolute;left:1504px;top:609px;width:176px;height:6px;background-image:radial-gradient(circle at 1.5px 1px,#8e8e8e 0.55px,transparent 0.95px),radial-gradient(circle at 4.5px 3px,#8e8e8e 0.55px,transparent 0.95px);background-size:6px 4px"></div>
<svg width="8" height="10" style="position:absolute;left:1513px;top:101.9px" fill="none" stroke="#8a8a8a" stroke-width="1.3"><path d="M1.5 1 L5.5 5 L1.5 9"/></svg>
<div style="position:absolute;top:99.4px;font-size:11.6px;line-height:15px;color:#000;white-space:nowrap;left:1527.5px;transform:scaleX(0.7914);transform-origin:0 50%;">SMD</div>
<div style="position:absolute;left:1524px;top:106px;width:1px;height:1px;background:#888"></div>
<svg width="8" height="10" style="position:absolute;left:1513px;top:117.9px" fill="none" stroke="#8a8a8a" stroke-width="1.3"><path d="M1.5 1 L5.5 5 L1.5 9"/></svg>
<div style="position:absolute;top:115.4px;font-size:11.6px;line-height:15px;color:#000;white-space:nowrap;left:1527.5px;transform:scaleX(0.8701);transform-origin:0 50%;">Symbols</div>
<div style="position:absolute;left:1524px;top:122px;width:1px;height:1px;background:#888"></div>
<svg width="8" height="10" style="position:absolute;left:1513px;top:133.9px" fill="none" stroke="#8a8a8a" stroke-width="1.3"><path d="M1.5 1 L5.5 5 L1.5 9"/></svg>
<div style="position:absolute;top:131.4px;font-size:11.6px;line-height:15px;color:#000;white-space:nowrap;left:1527.5px;transform:scaleX(0.9062);transform-origin:0 50%;">Through-Hole (TH)</div>
<div style="position:absolute;left:1524px;top:138px;width:1px;height:1px;background:#888"></div>
<svg width="8" height="10" style="position:absolute;left:1513px;top:149.9px" fill="none" stroke="#8a8a8a" stroke-width="1.3"><path d="M1.5 1 L5.5 5 L1.5 9"/></svg>
<div style="position:absolute;top:147.4px;font-size:11.6px;line-height:15px;color:#000;white-space:nowrap;left:1527.5px;transform:scaleX(0.7881);transform-origin:0 50%;">USER</div>
<div style="position:absolute;left:1524px;top:154px;width:1px;height:1px;background:#888"></div>
<div style="position:absolute;left:1507px;top:617px;width:13px;height:13px;background:#0067c0;border-radius:3px"><svg width="13" height="13" fill="none" stroke="#fff" stroke-width="1.3"><path d="M3 6.8 L5.4 9.2 L10 4"/></svg></div>
<div style="position:absolute;top:615.4px;font-size:11.6px;line-height:15px;color:#000;white-space:nowrap;left:1523.2px;transform:scaleX(0.9150);transform-origin:0 50%;">Add as component</div>
<div style="position:absolute;left:1508px;top:636px;width:16px;height:16px"><svg width="16" height="16" viewBox="0 0 16 16" ><rect x="1" y="1" width="13.5" height="13.5" fill="#0a0a8c" stroke="#000" stroke-width="1.2"/><rect x="3.5" y="1.5" width="8" height="5" fill="#fff"/><rect x="4" y="9" width="7.5" height="5.5" fill="#000"/><rect x="8.5" y="10.3" width="2" height="3.2" fill="#d8d8d8"/></svg></div>
<div style="position:absolute;left:1531px;top:635px;width:16px;height:18px"><svg width="16" height="18" viewBox="0 0 16 18" ><path d="M3.6 6 H12.4 L11.8 17 H4.2 Z" fill="#000"/><rect x="2" y="3.2" width="12" height="2" fill="#000"/><rect x="5.5" y="1.2" width="5" height="2.4" fill="#000"/><rect x="6.8" y="2" width="2.4" height="1" fill="#e8e8e8"/><path d="M6.2 7.5 V15.5 M9.8 7.5 V15.5" stroke="#f0f0f0" stroke-width="0.9"/><path d="M8 7.5 V15.5" stroke="#bbb" stroke-width="0.7"/><path d="M2 7 L3.6 8.5 M14 7 L12.4 8.5" stroke="#000" stroke-width="1"/></svg></div>
<div style="position:absolute;left:1587px;top:635px;width:18px;height:18px"><svg width="18" height="18" viewBox="0 0 18 18" ><path d="M15.3 9.5 A6.2 6.2 0 1 1 11.5 3.5" fill="none" stroke="#000" stroke-width="2.2"/><path d="M10 0.5 L16.5 2.5 L12.5 7.5 Z" fill="#000"/></svg></div>
<div style="position:absolute;left:1613px;top:636px;width:16px;height:16px"><svg width="16" height="16" viewBox="0 0 16 16" ><circle cx="8" cy="8" r="6.7" fill="#000"/><circle cx="8" cy="8" r="2.8" fill="#d8141e"/></svg></div>
<div style="position:absolute;left:1635px;top:635px;width:18px;height:18px"><svg width="18" height="18" viewBox="0 0 18 18" ><path d="M9 1 V7" stroke="#000" stroke-width="2.2"/><path d="M5 6 H13 L9 10.5 Z" fill="#000"/><path d="M1.5 16.5 H16.5 V14.5 H13.5 L12 12 H6 L4.5 14.5 H1.5 Z" fill="#000"/><rect x="7" y="12.8" width="4" height="1" fill="#e8e8e8"/></svg></div>
<div style="position:absolute;top:637.5px;font-size:11.2px;line-height:15px;color:#000;white-space:nowrap;left:1655.7px;transform:scaleX(0.8326);transform-origin:0 50%;">TOP</div>
<div style="position:absolute;left:1504px;top:657px;width:176px;height:1px;background:#b4b4b4"></div>
<div style="position:absolute;left:1505px;top:658px;width:175px;height:30px;background:#ebebeb"></div>
<div style="position:absolute;left:1505px;top:688px;width:174px;height:275px;background:#000"></div>
<div style="position:absolute;top:945.7px;font-size:11.6px;line-height:15px;color:#e8e8e8;white-space:nowrap;left:1605.5px;transform:scaleX(0.9096);transform-origin:0 50%;">Drag and Drop</div>
<div style="position:absolute;left:99px;top:75px;width:1396px;height:22px;background:#f1f1f1"></div>
<div style="position:absolute;left:99px;top:97px;width:24px;height:844px;background:#f1f1f1"></div>
<svg width="1680" height="1002" style="position:absolute;left:0;top:0" shape-rendering="crispEdges"><rect x="123" y="83" width="1" height="14" fill="#000"/><rect x="138" y="93" width="1" height="4" fill="#000"/><rect x="152" y="93" width="1" height="4" fill="#000"/><rect x="167" y="93" width="1" height="4" fill="#000"/><rect x="181" y="93" width="1" height="4" fill="#000"/><rect x="196" y="89" width="1" height="8" fill="#000"/><rect x="211" y="93" width="1" height="4" fill="#000"/><rect x="225" y="93" width="1" height="4" fill="#000"/><rect x="240" y="93" width="1" height="4" fill="#000"/><rect x="254" y="93" width="1" height="4" fill="#000"/><rect x="269" y="83" width="1" height="14" fill="#000"/><rect x="284" y="93" width="1" height="4" fill="#000"/><rect x="298" y="93" width="1" height="4" fill="#000"/><rect x="313" y="93" width="1" height="4" fill="#000"/><rect x="327" y="93" width="1" height="4" fill="#000"/><rect x="342" y="89" width="1" height="8" fill="#000"/><rect x="357" y="93" width="1" height="4" fill="#000"/><rect x="371" y="93" width="1" height="4" fill="#000"/><rect x="386" y="93" width="1" height="4" fill="#000"/><rect x="400" y="93" width="1" height="4" fill="#000"/><rect x="415" y="83" width="1" height="14" fill="#000"/><rect x="430" y="93" width="1" height="4" fill="#000"/><rect x="444" y="93" width="1" height="4" fill="#000"/><rect x="459" y="93" width="1" height="4" fill="#000"/><rect x="473" y="93" width="1" height="4" fill="#000"/><rect x="488" y="89" width="1" height="8" fill="#000"/><rect x="503" y="93" width="1" height="4" fill="#000"/><rect x="517" y="93" width="1" height="4" fill="#000"/><rect x="532" y="93" width="1" height="4" fill="#000"/><rect x="546" y="93" width="1" height="4" fill="#000"/><rect x="561" y="83" width="1" height="14" fill="#000"/><rect x="576" y="93" width="1" height="4" fill="#000"/><rect x="590" y="93" width="1" height="4" fill="#000"/><rect x="605" y="93" width="1" height="4" fill="#000"/><rect x="619" y="93" width="1" height="4" fill="#000"/><rect x="634" y="89" width="1" height="8" fill="#000"/><rect x="649" y="93" width="1" height="4" fill="#000"/><rect x="663" y="93" width="1" height="4" fill="#000"/><rect x="678" y="93" width="1" height="4" fill="#000"/><rect x="692" y="93" width="1" height="4" fill="#000"/><rect x="707" y="83" width="1" height="14" fill="#000"/><rect x="722" y="93" width="1" height="4" fill="#000"/><rect x="736" y="93" width="1" height="4" fill="#000"/><rect x="751" y="93" width="1" height="4" fill="#000"/><rect x="765" y="93" width="1" height="4" fill="#000"/><rect x="780" y="89" width="1" height="8" fill="#000"/><rect x="795" y="93" width="1" height="4" fill="#000"/><rect x="809" y="93" width="1" height="4" fill="#000"/><rect x="824" y="93" width="1" height="4" fill="#000"/><rect x="838" y="93" width="1" height="4" fill="#000"/><rect x="853" y="83" width="1" height="14" fill="#000"/><rect x="868" y="93" width="1" height="4" fill="#000"/><rect x="882" y="93" width="1" height="4" fill="#000"/><rect x="897" y="93" width="1" height="4" fill="#000"/><rect x="911" y="93" width="1" height="4" fill="#000"/><rect x="926" y="89" width="1" height="8" fill="#000"/><rect x="941" y="93" width="1" height="4" fill="#000"/><rect x="955" y="93" width="1" height="4" fill="#000"/><rect x="970" y="93" width="1" height="4" fill="#000"/><rect x="984" y="93" width="1" height="4" fill="#000"/><rect x="999" y="83" width="1" height="14" fill="#000"/><rect x="1014" y="93" width="1" height="4" fill="#000"/><rect x="1028" y="93" width="1" height="4" fill="#000"/><rect x="1043" y="93" width="1" height="4" fill="#000"/><rect x="1057" y="93" width="1" height="4" fill="#000"/><rect x="1072" y="89" width="1" height="8" fill="#000"/><rect x="1087" y="93" width="1" height="4" fill="#000"/><rect x="1101" y="93" width="1" height="4" fill="#000"/><rect x="1116" y="93" width="1" height="4" fill="#000"/><rect x="1130" y="93" width="1" height="4" fill="#000"/><rect x="1145" y="83" width="1" height="14" fill="#000"/><rect x="1160" y="93" width="1" height="4" fill="#000"/><rect x="1174" y="93" width="1" height="4" fill="#000"/><rect x="1189" y="93" width="1" height="4" fill="#000"/><rect x="1203" y="93" width="1" height="4" fill="#000"/><rect x="1218" y="89" width="1" height="8" fill="#000"/><rect x="1233" y="93" width="1" height="4" fill="#000"/><rect x="1247" y="93" width="1" height="4" fill="#000"/><rect x="1262" y="93" width="1" height="4" fill="#000"/><rect x="1276" y="93" width="1" height="4" fill="#000"/><rect x="1291" y="83" width="1" height="14" fill="#000"/><rect x="1306" y="93" width="1" height="4" fill="#000"/><rect x="1320" y="93" width="1" height="4" fill="#000"/><rect x="1335" y="93" width="1" height="4" fill="#000"/><rect x="1349" y="93" width="1" height="4" fill="#000"/><rect x="1364" y="89" width="1" height="8" fill="#000"/><rect x="1379" y="93" width="1" height="4" fill="#000"/><rect x="1393" y="93" width="1" height="4" fill="#000"/><rect x="1408" y="93" width="1" height="4" fill="#000"/><rect x="1422" y="93" width="1" height="4" fill="#000"/><rect x="1437" y="83" width="1" height="14" fill="#000"/><rect x="1452" y="93" width="1" height="4" fill="#000"/><rect x="1466" y="93" width="1" height="4" fill="#000"/><rect x="1481" y="93" width="1" height="4" fill="#000"/><rect x="119" y="930" width="4" height="1" fill="#000"/><rect x="119" y="916" width="4" height="1" fill="#000"/><rect x="114" y="901" width="9" height="1" fill="#000"/><rect x="119" y="887" width="4" height="1" fill="#000"/><rect x="119" y="872" width="4" height="1" fill="#000"/><rect x="119" y="857" width="4" height="1" fill="#000"/><rect x="119" y="843" width="4" height="1" fill="#000"/><rect x="106" y="828" width="17" height="1" fill="#000"/><rect x="119" y="814" width="4" height="1" fill="#000"/><rect x="119" y="799" width="4" height="1" fill="#000"/><rect x="119" y="784" width="4" height="1" fill="#000"/><rect x="119" y="770" width="4" height="1" fill="#000"/><rect x="114" y="755" width="9" height="1" fill="#000"/><rect x="119" y="741" width="4" height="1" fill="#000"/><rect x="119" y="726" width="4" height="1" fill="#000"/><rect x="119" y="711" width="4" height="1" fill="#000"/><rect x="119" y="697" width="4" height="1" fill="#000"/><rect x="106" y="682" width="17" height="1" fill="#000"/><rect x="119" y="668" width="4" height="1" fill="#000"/><rect x="119" y="653" width="4" height="1" fill="#000"/><rect x="119" y="638" width="4" height="1" fill="#000"/><rect x="119" y="624" width="4" height="1" fill="#000"/><rect x="114" y="609" width="9" height="1" fill="#000"/><rect x="119" y="595" width="4" height="1" fill="#000"/><rect x="119" y="580" width="4" height="1" fill="#000"/><rect x="119" y="565" width="4" height="1" fill="#000"/><rect x="119" y="551" width="4" height="1" fill="#000"/><rect x="106" y="536" width="17" height="1" fill="#000"/><rect x="119" y="522" width="4" height="1" fill="#000"/><rect x="119" y="507" width="4" height="1" fill="#000"/><rect x="119" y="492" width="4" height="1" fill="#000"/><rect x="119" y="478" width="4" height="1" fill="#000"/><rect x="114" y="463" width="9" height="1" fill="#000"/><rect x="119" y="449" width="4" height="1" fill="#000"/><rect x="119" y="434" width="4" height="1" fill="#000"/><rect x="119" y="419" width="4" height="1" fill="#000"/><rect x="119" y="405" width="4" height="1" fill="#000"/><rect x="106" y="390" width="17" height="1" fill="#000"/><rect x="119" y="376" width="4" height="1" fill="#000"/><rect x="119" y="361" width="4" height="1" fill="#000"/><rect x="119" y="346" width="4" height="1" fill="#000"/><rect x="119" y="332" width="4" height="1" fill="#000"/><rect x="114" y="317" width="9" height="1" fill="#000"/><rect x="119" y="303" width="4" height="1" fill="#000"/><rect x="119" y="288" width="4" height="1" fill="#000"/><rect x="119" y="273" width="4" height="1" fill="#000"/><rect x="119" y="259" width="4" height="1" fill="#000"/><rect x="106" y="244" width="17" height="1" fill="#000"/><rect x="119" y="230" width="4" height="1" fill="#000"/><rect x="119" y="215" width="4" height="1" fill="#000"/><rect x="119" y="200" width="4" height="1" fill="#000"/><rect x="119" y="186" width="4" height="1" fill="#000"/><rect x="114" y="171" width="9" height="1" fill="#000"/><rect x="119" y="157" width="4" height="1" fill="#000"/><rect x="119" y="142" width="4" height="1" fill="#000"/><rect x="119" y="127" width="4" height="1" fill="#000"/><rect x="119" y="113" width="4" height="1" fill="#000"/><rect x="106" y="98" width="17" height="1" fill="#000"/><rect x="122" y="96" width="1373" height="1" fill="#6a6a6a"/><rect x="122" y="97" width="1" height="844" fill="#222"/><rect x="1169" y="77" width="1" height="20" fill="#e02020"/><rect x="100" y="893" width="22" height="1" fill="#e02020"/></svg>
<div class="rl" style="left:102.4px;top:81px">mm</div>
<div class="rl" style="left:127.1px;top:80.8px">0</div>
<div class="rl" style="left:273.1px;top:80.8px">10</div>
<div class="rl" style="left:419.1px;top:80.8px">20</div>
<div class="rl" style="left:565.1px;top:80.8px">30</div>
<div class="rl" style="left:711.1px;top:80.8px">40</div>
<div class="rl" style="left:857.1px;top:80.8px">50</div>
<div class="rl" style="left:1003.1px;top:80.8px">60</div>
<div class="rl" style="left:1149.1px;top:80.8px">70</div>
<div class="rl" style="left:1295.1px;top:80.8px">80</div>
<div class="rl" style="left:1441.1px;top:80.8px">90</div>
<div class="rl rv" style="left:103.8px;top:833.0px">50</div>
<div class="rl rv" style="left:103.8px;top:687.0px">60</div>
<div class="rl rv" style="left:103.8px;top:541.0px">70</div>
<div class="rl rv" style="left:103.8px;top:395.0px">80</div>
<div class="rl rv" style="left:103.8px;top:249.0px">90</div>
<div class="rl rv" style="left:103.8px;top:103.0px">100</div>
<div style="position:absolute;left:0;top:964px;width:1680px;height:38px;background:#f0f0f0"></div>
<div style="position:absolute;left:99px;top:963px;width:1581px;height:1px;background:#f8f8f8"></div>
<div style="position:absolute;left:401px;top:964px;width:1279px;height:1px;background:#8f8f8f"></div>
<svg width="130" height="20" style="position:absolute;left:99px;top:942px"><path d="M56.8 3 L60 17.2 H105.8 L110.3 2.7" fill="#f1f1f1" stroke="#4a4a4a" stroke-width="0.9"/><path d="M5.3 1 L10.4 17.2 H54.2 L56.8 3 V1 Z" fill="#fff" stroke="none"/><path d="M5.3 2.7 L10.4 17.2 H54.2 L56.8 3" fill="none" stroke="#3a3a3a" stroke-width="1"/></svg>
<div style="position:absolute;top:943.9px;font-size:11.6px;line-height:15px;color:#000;white-space:nowrap;left:110.0px;transform:scaleX(0.9280);transform-origin:0 50%;">Board 1</div>
<div style="position:absolute;top:943.9px;font-size:11.6px;line-height:15px;color:#000;white-space:nowrap;left:160.7px;transform:scaleX(0.8737);transform-origin:0 50%;">XGerber</div>
<div style="position:absolute;left:3px;top:965px;width:84px;height:36px;border:1px solid #c8c8c8;border-radius:2px;box-sizing:border-box"></div>
<div style="position:absolute;top:968.2px;font-size:11.6px;line-height:15px;color:#000;white-space:nowrap;left:7.3px;transform:scaleX(0.9124);transform-origin:0 50%;">X:</div>
<div style="position:absolute;top:984.2px;font-size:11.6px;line-height:15px;color:#000;white-space:nowrap;left:7.3px;transform:scaleX(0.9690);transform-origin:0 50%;">Y:</div>
<div style="position:absolute;top:968.2px;font-size:11.6px;line-height:15px;color:#000;white-space:nowrap;left:30.0px;transform:scaleX(0.9014);transform-origin:0 50%;">71,644 mm</div>
<div style="position:absolute;top:984.2px;font-size:11.6px;line-height:15px;color:#000;white-space:nowrap;left:30.0px;transform:scaleX(0.9014);transform-origin:0 50%;">45,548 mm</div>
<div style="position:absolute;left:90px;top:965px;width:184px;height:37px;border:1px solid #c8c8c8;box-sizing:border-box;background:#f6f6f6"></div>
<div style="position:absolute;left:91px;top:983px;width:168px;height:1px;background:#c0c0c0"></div>
<div style="position:absolute;left:138px;top:965px;width:1px;height:37px;background:#c0c0c0"></div>
<div style="position:absolute;top:964.9px;font-size:11.6px;line-height:15px;color:#000;white-space:nowrap;left:98.7px;transform:scaleX(0.8873);transform-origin:0 50%;">visible</div>
<div style="position:absolute;top:984.1px;font-size:11.6px;line-height:15px;color:#000;white-space:nowrap;left:98.7px;transform:scaleX(0.9241);transform-origin:0 50%;">active</div>
<div style="position:absolute;left:139px;top:965px;width:120px;height:18px;background:#000"></div>
<div style="position:absolute;top:965.1px;font-size:14.3px;line-height:19px;color:#3c64e6;white-space:nowrap;font-weight:bold;font-family:'Liberation Serif',serif;left:142.7px;transform:scaleX(0.8583);transform-origin:0 50%;">C1</div>
<div style="position:absolute;left:142.8px;top:985.8px;width:13px;height:13px;border-radius:50%;border:1px solid #5a5a5a;background:#fafafa;box-sizing:border-box"></div>
<div style="position:absolute;top:965.1px;font-size:14.3px;line-height:19px;color:#e62828;white-space:nowrap;font-weight:bold;font-family:'Liberation Serif',serif;left:166.9px;transform:scaleX(0.9932);transform-origin:0 50%;">S1</div>
<div style="position:absolute;left:162px;top:984px;width:1px;height:18px;background:#d0d0d0"></div>
<div style="position:absolute;left:166.8px;top:985.8px;width:13px;height:13px;border-radius:50%;border:1px solid #5a5a5a;background:#fafafa;box-sizing:border-box"></div>
<div style="position:absolute;top:965.1px;font-size:14.3px;line-height:19px;color:#28a028;white-space:nowrap;font-weight:bold;font-family:'Liberation Serif',serif;left:190.8px;transform:scaleX(0.8983);transform-origin:0 50%;">C2</div>
<div style="position:absolute;left:186px;top:984px;width:1px;height:18px;background:#d0d0d0"></div>
<div style="position:absolute;left:190.8px;top:985.8px;width:13px;height:13px;border-radius:50%;background:#0067c0;box-sizing:border-box"><div style="position:absolute;left:4px;top:4px;width:5px;height:5px;border-radius:50%;background:#fff"></div></div>
<div style="position:absolute;top:965.1px;font-size:14.3px;line-height:19px;color:#e6e628;white-space:nowrap;font-weight:bold;font-family:'Liberation Serif',serif;left:215.1px;transform:scaleX(1.0197);transform-origin:0 50%;">S2</div>
<div style="position:absolute;left:210px;top:984px;width:1px;height:18px;background:#d0d0d0"></div>
<div style="position:absolute;left:214.8px;top:985.8px;width:13px;height:13px;border-radius:50%;border:1px solid #5a5a5a;background:#fafafa;box-sizing:border-box"></div>
<div style="position:absolute;top:965.1px;font-size:14.3px;line-height:19px;color:#fff;white-space:nowrap;font-weight:bold;font-family:'Liberation Serif',serif;left:242.5px;transform:scaleX(0.8092);transform-origin:0 50%;">O</div>
<div style="position:absolute;left:235px;top:984px;width:1px;height:18px;background:#d0d0d0"></div>
<div style="position:absolute;left:238.8px;top:985.8px;width:13px;height:13px;border-radius:50%;border:1px solid #5a5a5a;background:#fafafa;box-sizing:border-box"></div>
<div style="position:absolute;top:975.3px;font-size:11.6px;line-height:15px;color:#000;white-space:nowrap;left:263.3px;transform:scaleX(0.7131);transform-origin:0 50%;">?</div>
<div style="position:absolute;left:278px;top:964px;width:38px;height:38px;border-left:1px solid #a8a8a8;border-top:1px solid #a8a8a8;border-right:1px solid #fff;box-sizing:border-box"></div>
<div style="position:absolute;left:283px;top:969px;width:28px;height:28px"><svg width="28" height="28" viewBox="0 0 28 28" ><rect x="1" y="1.3" width="26" height="25.5" fill="#808080"/><path d="M1 7.3 H10 L18.5 17.5" fill="none" stroke="#000" stroke-width="5.6" stroke-linecap="butt"/><circle cx="18.8" cy="18" r="6" fill="#000"/><path d="M1 7.3 H10 L17 15.8" fill="none" stroke="#fff" stroke-width="2"/><circle cx="18.8" cy="18" r="3.3" fill="#000" stroke="#fff" stroke-width="1.9"/></svg></div>
<div style="position:absolute;left:319px;top:964px;width:38px;height:38px;border-left:1px solid #a8a8a8;border-top:1px solid #a8a8a8;border-right:1px solid #fff;box-sizing:border-box"></div>
<div style="position:absolute;left:324px;top:969px;width:28px;height:28px"><svg width="28" height="28" viewBox="0 0 28 28" ><circle cx="14.5" cy="13.2" r="7.4" fill="#000"/><path d="M14.5 -0.5 V27 M0.5 13.2 H28.5" stroke="#d81420" stroke-width="3.4"/><path d="M14.5 -0.5 V27 M0.5 13.2 H28.5" stroke="#fff" stroke-width="1.1"/></svg></div>
<div style="position:absolute;left:360px;top:964px;width:38px;height:38px;border-left:1px solid #a8a8a8;border-top:1px solid #a8a8a8;border-right:1px solid #fff;box-sizing:border-box"></div>
<div style="position:absolute;left:365px;top:969px;width:28px;height:28px"><svg width="28" height="28" viewBox="0 0 28 28" ><path d="M3.5 18.5 C2.5 14.5 7.5 11.5 10.5 12 C13.5 12.5 15.5 8.5 19.5 8 C23.5 7.5 25.5 11 23.5 13.5 C20.5 17 16 16.5 14 19 C11 22.5 4.5 22.5 3.5 18.5 Z" fill="none" stroke="#4a4a4a" stroke-width="2.6"/><path d="M3 4.5 L25.5 24.5 M24 3 L5 25" stroke="#d81420" stroke-width="1.7"/></svg></div>
<div style="position:absolute;left:401px;top:964px;width:1px;height:38px;background:#8f8f8f"></div>
<div style="position:absolute;left:408px;top:981px;width:1259px;height:1px;background:#b0b0b0"></div>
<div style="position:absolute;left:408px;top:982px;width:1259px;height:1px;background:#fff"></div>
<svg id="pcb" width="1680" height="1002" viewBox="0 0 1680 1002" style="position:absolute;left:0;top:0"><defs><clipPath id="cv"><rect x="122.5" y="97" width="1055.3" height="844"/></clipPath></defs><g clip-path="url(#cv)"><rect x="122" y="97" width="1057" height="845" fill="#000"/><path d="M123 928.5h1M123 909.5h1M123 872.5h1M123 853.5h1M123 835.5h1M123 798.5h1M123 779.5h1M123 761.5h1M123 724.5h1M123 705.5h1M123 687.5h1M123 649.5h1M123 631.5h1M123 612.5h1M123 575.5h1M123 557.5h1M123 538.5h1M123 501.5h1M123 483.5h1M123 464.5h1M123 427.5h1M123 408.5h1M123 390.5h1M123 353.5h1M123 334.5h1M123 316.5h1M123 279.5h1M123 260.5h1M123 242.5h1M123 204.5h1M123 186.5h1M123 167.5h1M123 130.5h1M123 112.5h1M142 928.5h1M142 909.5h1M142 890.5h1M142 872.5h1M142 853.5h1M142 835.5h1M142 816.5h1M142 798.5h1M142 779.5h1M142 761.5h1M142 742.5h1M142 724.5h1M142 705.5h1M142 687.5h1M142 668.5h1M142 649.5h1M142 631.5h1M142 612.5h1M142 594.5h1M142 575.5h1M142 557.5h1M142 538.5h1M142 520.5h1M142 501.5h1M142 483.5h1M142 464.5h1M142 445.5h1M142 427.5h1M142 408.5h1M142 390.5h1M142 371.5h1M142 353.5h1M142 334.5h1M142 316.5h1M142 297.5h1M142 279.5h1M142 260.5h1M142 242.5h1M142 223.5h1M142 204.5h1M142 186.5h1M142 167.5h1M142 149.5h1M142 130.5h1M142 112.5h1M160 928.5h1M160 909.5h1M160 890.5h1M160 872.5h1M160 853.5h1M160 835.5h1M160 816.5h1M160 798.5h1M160 779.5h1M160 761.5h1M160 742.5h1M160 724.5h1M160 705.5h1M160 687.5h1M160 668.5h1M160 649.5h1M160 631.5h1M160 612.5h1M160 594.5h1M160 575.5h1M160 557.5h1M160 538.5h1M160 520.5h1M160 501.5h1M160 483.5h1M160 464.5h1M160 445.5h1M160 427.5h1M160 408.5h1M160 390.5h1M160 371.5h1M160 353.5h1M160 334.5h1M160 316.5h1M160 297.5h1M160 279.5h1M160 260.5h1M160 242.5h1M160 223.5h1M160 204.5h1M160 186.5h1M160 167.5h1M160 149.5h1M160 130.5h1M160 112.5h1M179 928.5h1M179 909.5h1M179 890.5h1M179 872.5h1M179 853.5h1M179 835.5h1M179 816.5h1M179 798.5h1M179 779.5h1M179 761.5h1M179 742.5h1M179 724.5h1M179 705.5h1M179 687.5h1M179 668.5h1M179 649.5h1M179 631.5h1M179 612.5h1M179 594.5h1M179 575.5h1M179 557.5h1M179 538.5h1M179 520.5h1M179 501.5h1M179 483.5h1M179 464.5h1M179 445.5h1M179 427.5h1M179 408.5h1M179 390.5h1M179 371.5h1M179 353.5h1M179 334.5h1M179 316.5h1M179 297.5h1M179 279.5h1M179 260.5h1M179 242.5h1M179 223.5h1M179 204.5h1M179 186.5h1M179 167.5h1M179 149.5h1M179 130.5h1M179 112.5h1M197 928.5h1M197 909.5h1M197 872.5h1M197 853.5h1M197 835.5h1M197 798.5h1M197 779.5h1M197 761.5h1M197 724.5h1M197 705.5h1M197 687.5h1M197 649.5h1M197 631.5h1M197 612.5h1M197 575.5h1M197 557.5h1M197 538.5h1M197 501.5h1M197 483.5h1M197 464.5h1M197 427.5h1M197 408.5h1M197 390.5h1M197 353.5h1M197 334.5h1M197 316.5h1M197 279.5h1M197 260.5h1M197 242.5h1M197 204.5h1M197 186.5h1M197 167.5h1M197 130.5h1M197 112.5h1M216 928.5h1M216 909.5h1M216 890.5h1M216 872.5h1M216 853.5h1M216 835.5h1M216 816.5h1M216 798.5h1M216 779.5h1M216 761.5h1M216 742.5h1M216 724.5h1M216 705.5h1M216 687.5h1M216 668.5h1M216 649.5h1M216 631.5h1M216 612.5h1M216 594.5h1M216 575.5h1M216 557.5h1M216 538.5h1M216 520.5h1M216 501.5h1M216 483.5h1M216 464.5h1M216 445.5h1M216 427.5h1M216 408.5h1M216 390.5h1M216 371.5h1M216 353.5h1M216 334.5h1M216 316.5h1M216 297.5h1M216 279.5h1M216 260.5h1M216 242.5h1M216 223.5h1M216 204.5h1M216 186.5h1M216 167.5h1M216 149.5h1M216 130.5h1M216 112.5h1M234 928.5h1M234 909.5h1M234 890.5h1M234 872.5h1M234 853.5h1M234 835.5h1M234 816.5h1M234 798.5h1M234 779.5h1M234 761.5h1M234 742.5h1M234 724.5h1M234 705.5h1M234 687.5h1M234 668.5h1M234 649.5h1M234 631.5h1M234 612.5h1M234 594.5h1M234 575.5h1M234 557.5h1M234 538.5h1M234 520.5h1M234 501.5h1M234 483.5h1M234 464.5h1M234 445.5h1M234 427.5h1M234 408.5h1M234 390.5h1M234 371.5h1M234 353.5h1M234 334.5h1M234 316.5h1M234 297.5h1M234 279.5h1M234 260.5h1M234 242.5h1M234 223.5h1M234 204.5h1M234 186.5h1M234 167.5h1M234 149.5h1M234 130.5h1M234 112.5h1M253 928.5h1M253 909.5h1M253 890.5h1M253 872.5h1M253 853.5h1M253 835.5h1M253 816.5h1M253 798.5h1M253 779.5h1M253 761.5h1M253 742.5h1M253 724.5h1M253 705.5h1M253 687.5h1M253 668.5h1M253 649.5h1M253 631.5h1M253 612.5h1M253 594.5h1M253 575.5h1M253 557.5h1M253 538.5h1M253 520.5h1M253 501.5h1M253 483.5h1M253 464.5h1M253 445.5h1M253 427.5h1M253 408.5h1M253 390.5h1M253 371.5h1M253 353.5h1M253 334.5h1M253 316.5h1M253 297.5h1M253 279.5h1M253 260.5h1M253 242.5h1M253 223.5h1M253 204.5h1M253 186.5h1M253 167.5h1M253 149.5h1M253 130.5h1M253 112.5h1M271 928.5h1M271 909.5h1M271 872.5h1M271 853.5h1M271 835.5h1M271 798.5h1M271 779.5h1M271 761.5h1M271 724.5h1M271 705.5h1M271 687.5h1M271 649.5h1M271 631.5h1M271 612.5h1M271 575.5h1M271 557.5h1M271 538.5h1M271 501.5h1M271 483.5h1M271 464.5h1M271 427.5h1M271 408.5h1M271 390.5h1M271 353.5h1M271 334.5h1M271 316.5h1M271 279.5h1M271 260.5h1M271 242.5h1M271 204.5h1M271 186.5h1M271 167.5h1M271 130.5h1M271 112.5h1M290 928.5h1M290 909.5h1M290 890.5h1M290 872.5h1M290 853.5h1M290 835.5h1M290 816.5h1M290 798.5h1M290 779.5h1M290 761.5h1M290 742.5h1M290 724.5h1M290 705.5h1M290 687.5h1M290 668.5h1M290 649.5h1M290 631.5h1M290 612.5h1M290 594.5h1M290 575.5h1M290 557.5h1M290 538.5h1M290 520.5h1M290 501.5h1M290 483.5h1M290 464.5h1M290 445.5h1M290 427.5h1M290 408.5h1M290 390.5h1M290 371.5h1M290 353.5h1M290 334.5h1M290 316.5h1M290 297.5h1M290 279.5h1M290 260.5h1M290 242.5h1M290 223.5h1M290 204.5h1M290 186.5h1M290 167.5h1M290 149.5h1M290 130.5h1M290 112.5h1M308 928.5h1M308 909.5h1M308 890.5h1M308 872.5h1M308 853.5h1M308 835.5h1M308 816.5h1M308 798.5h1M308 779.5h1M308 761.5h1M308 742.5h1M308 724.5h1M308 705.5h1M308 687.5h1M308 668.5h1M308 649.5h1M308 631.5h1M308 612.5h1M308 594.5h1M308 575.5h1M308 557.5h1M308 538.5h1M308 520.5h1M308 501.5h1M308 483.5h1M308 464.5h1M308 445.5h1M308 427.5h1M308 408.5h1M308 390.5h1M308 371.5h1M308 353.5h1M308 334.5h1M308 316.5h1M308 297.5h1M308 279.5h1M308 260.5h1M308 242.5h1M308 223.5h1M308 204.5h1M308 186.5h1M308 167.5h1M308 149.5h1M308 130.5h1M308 112.5h1M327 928.5h1M327 909.5h1M327 890.5h1M327 872.5h1M327 853.5h1M327 835.5h1M327 816.5h1M327 798.5h1M327 779.5h1M327 761.5h1M327 742.5h1M327 724.5h1M327 705.5h1M327 687.5h1M327 668.5h1M327 649.5h1M327 631.5h1M327 612.5h1M327 594.5h1M327 575.5h1M327 557.5h1M327 538.5h1M327 520.5h1M327 501.5h1M327 483.5h1M327 464.5h1M327 445.5h1M327 427.5h1M327 408.5h1M327 390.5h1M327 371.5h1M327 353.5h1M327 334.5h1M327 316.5h1M327 297.5h1M327 279.5h1M327 260.5h1M327 242.5h1M327 223.5h1M327 204.5h1M327 186.5h1M327 167.5h1M327 149.5h1M327 130.5h1M327 112.5h1M346 928.5h1M346 909.5h1M346 872.5h1M346 853.5h1M346 835.5h1M346 798.5h1M346 779.5h1M346 761.5h1M346 724.5h1M346 705.5h1M346 687.5h1M346 649.5h1M346 631.5h1M346 612.5h1M346 575.5h1M346 557.5h1M346 538.5h1M346 501.5h1M346 483.5h1M346 464.5h1M346 427.5h1M346 408.5h1M346 390.5h1M346 353.5h1M346 334.5h1M346 316.5h1M346 279.5h1M346 260.5h1M346 242.5h1M346 204.5h1M346 186.5h1M346 167.5h1M346 130.5h1M346 112.5h1M364 928.5h1M364 909.5h1M364 890.5h1M364 872.5h1M364 853.5h1M364 835.5h1M364 816.5h1M364 798.5h1M364 779.5h1M364 761.5h1M364 742.5h1M364 724.5h1M364 705.5h1M364 687.5h1M364 668.5h1M364 649.5h1M364 631.5h1M364 612.5h1M364 594.5h1M364 575.5h1M364 557.5h1M364 538.5h1M364 520.5h1M364 501.5h1M364 483.5h1M364 464.5h1M364 445.5h1M364 427.5h1M364 408.5h1M364 390.5h1M364 371.5h1M364 353.5h1M364 334.5h1M364 316.5h1M364 297.5h1M364 279.5h1M364 260.5h1M364 242.5h1M364 223.5h1M364 204.5h1M364 186.5h1M364 167.5h1M364 149.5h1M364 130.5h1M364 112.5h1M383 928.5h1M383 909.5h1M383 890.5h1M383 872.5h1M383 853.5h1M383 835.5h1M383 816.5h1M383 798.5h1M383 779.5h1M383 761.5h1M383 742.5h1M383 724.5h1M383 705.5h1M383 687.5h1M383 668.5h1M383 649.5h1M383 631.5h1M383 612.5h1M383 594.5h1M383 575.5h1M383 557.5h1M383 538.5h1M383 520.5h1M383 501.5h1M383 483.5h1M383 464.5h1M383 445.5h1M383 427.5h1M383 408.5h1M383 390.5h1M383 371.5h1M383 353.5h1M383 334.5h1M383 316.5h1M383 297.5h1M383 279.5h1M383 260.5h1M383 242.5h1M383 223.5h1M383 204.5h1M383 186.5h1M383 167.5h1M383 149.5h1M383 130.5h1M383 112.5h1M401 928.5h1M401 909.5h1M401 890.5h1M401 872.5h1M401 853.5h1M401 835.5h1M401 816.5h1M401 798.5h1M401 779.5h1M401 761.5h1M401 742.5h1M401 724.5h1M401 705.5h1M401 687.5h1M401 668.5h1M401 649.5h1M401 631.5h1M401 612.5h1M401 594.5h1M401 575.5h1M401 557.5h1M401 538.5h1M401 520.5h1M401 501.5h1M401 483.5h1M401 464.5h1M401 445.5h1M401 427.5h1M401 408.5h1M401 390.5h1M401 371.5h1M401 353.5h1M401 334.5h1M401 316.5h1M401 297.5h1M401 279.5h1M401 260.5h1M401 242.5h1M401 223.5h1M401 204.5h1M401 186.5h1M401 167.5h1M401 149.5h1M401 130.5h1M401 112.5h1M420 928.5h1M420 909.5h1M420 872.5h1M420 853.5h1M420 835.5h1M420 798.5h1M420 779.5h1M420 761.5h1M420 724.5h1M420 705.5h1M420 687.5h1M420 649.5h1M420 631.5h1M420 612.5h1M420 575.5h1M420 557.5h1M420 538.5h1M420 501.5h1M420 483.5h1M420 464.5h1M420 427.5h1M420 408.5h1M420 390.5h1M420 353.5h1M420 334.5h1M420 316.5h1M420 279.5h1M420 260.5h1M420 242.5h1M420 204.5h1M420 186.5h1M420 167.5h1M420 130.5h1M420 112.5h1M438 928.5h1M438 909.5h1M438 890.5h1M438 872.5h1M438 853.5h1M438 835.5h1M438 816.5h1M438 798.5h1M438 779.5h1M438 761.5h1M438 742.5h1M438 724.5h1M438 705.5h1M438 687.5h1M438 668.5h1M438 649.5h1M438 631.5h1M438 612.5h1M438 594.5h1M438 575.5h1M438 557.5h1M438 538.5h1M438 520.5h1M438 501.5h1M438 483.5h1M438 464.5h1M438 445.5h1M438 427.5h1M438 408.5h1M438 390.5h1M438 371.5h1M438 353.5h1M438 334.5h1M438 316.5h1M438 297.5h1M438 279.5h1M438 260.5h1M438 242.5h1M438 223.5h1M438 204.5h1M438 186.5h1M438 167.5h1M438 149.5h1M438 130.5h1M438 112.5h1M457 928.5h1M457 909.5h1M457 890.5h1M457 872.5h1M457 853.5h1M457 835.5h1M457 816.5h1M457 798.5h1M457 779.5h1M457 761.5h1M457 742.5h1M457 724.5h1M457 705.5h1M457 687.5h1M457 668.5h1M457 649.5h1M457 631.5h1M457 612.5h1M457 594.5h1M457 575.5h1M457 557.5h1M457 538.5h1M457 520.5h1M457 501.5h1M457 483.5h1M457 464.5h1M457 445.5h1M457 427.5h1M457 408.5h1M457 390.5h1M457 371.5h1M457 353.5h1M457 334.5h1M457 316.5h1M457 297.5h1M457 279.5h1M457 260.5h1M457 242.5h1M457 223.5h1M457 204.5h1M457 186.5h1M457 167.5h1M457 149.5h1M457 130.5h1M457 112.5h1M475 928.5h1M475 909.5h1M475 890.5h1M475 872.5h1M475 853.5h1M475 835.5h1M475 816.5h1M475 798.5h1M475 779.5h1M475 761.5h1M475 742.5h1M475 724.5h1M475 705.5h1M475 687.5h1M475 668.5h1M475 649.5h1M475 631.5h1M475 612.5h1M475 594.5h1M475 575.5h1M475 557.5h1M475 538.5h1M475 520.5h1M475 501.5h1M475 483.5h1M475 464.5h1M475 445.5h1M475 427.5h1M475 408.5h1M475 390.5h1M475 371.5h1M475 353.5h1M475 334.5h1M475 316.5h1M475 297.5h1M475 279.5h1M475 260.5h1M475 242.5h1M475 223.5h1M475 204.5h1M475 186.5h1M475 167.5h1M475 149.5h1M475 130.5h1M475 112.5h1M494 928.5h1M494 909.5h1M494 872.5h1M494 853.5h1M494 835.5h1M494 798.5h1M494 779.5h1M494 761.5h1M494 724.5h1M494 705.5h1M494 687.5h1M494 649.5h1M494 631.5h1M494 612.5h1M494 575.5h1M494 557.5h1M494 538.5h1M494 501.5h1M494 483.5h1M494 464.5h1M494 427.5h1M494 408.5h1M494 390.5h1M494 353.5h1M494 334.5h1M494 316.5h1M494 279.5h1M494 260.5h1M494 242.5h1M494 204.5h1M494 186.5h1M494 167.5h1M494 130.5h1M494 112.5h1M512 928.5h1M512 909.5h1M512 890.5h1M512 872.5h1M512 853.5h1M512 835.5h1M512 816.5h1M512 798.5h1M512 779.5h1M512 761.5h1M512 742.5h1M512 724.5h1M512 705.5h1M512 687.5h1M512 668.5h1M512 649.5h1M512 631.5h1M512 612.5h1M512 594.5h1M512 575.5h1M512 557.5h1M512 538.5h1M512 520.5h1M512 501.5h1M512 483.5h1M512 464.5h1M512 445.5h1M512 427.5h1M512 408.5h1M512 390.5h1M512 371.5h1M512 353.5h1M512 334.5h1M512 316.5h1M512 297.5h1M512 279.5h1M512 260.5h1M512 242.5h1M512 223.5h1M512 204.5h1M512 186.5h1M512 167.5h1M512 149.5h1M512 130.5h1M512 112.5h1M531 928.5h1M531 909.5h1M531 890.5h1M531 872.5h1M531 853.5h1M531 835.5h1M531 816.5h1M531 798.5h1M531 779.5h1M531 761.5h1M531 742.5h1M531 724.5h1M531 705.5h1M531 687.5h1M531 668.5h1M531 649.5h1M531 631.5h1M531 612.5h1M531 594.5h1M531 575.5h1M531 557.5h1M531 538.5h1M531 520.5h1M531 501.5h1M531 483.5h1M531 464.5h1M531 445.5h1M531 427.5h1M531 408.5h1M531 390.5h1M531 371.5h1M531 353.5h1M531 334.5h1M531 316.5h1M531 297.5h1M531 279.5h1M531 260.5h1M531 242.5h1M531 223.5h1M531 204.5h1M531 186.5h1M531 167.5h1M531 149.5h1M531 130.5h1M531 112.5h1M549 928.5h1M549 909.5h1M549 890.5h1M549 872.5h1M549 853.5h1M549 835.5h1M549 816.5h1M549 798.5h1M549 779.5h1M549 761.5h1M549 742.5h1M549 724.5h1M549 705.5h1M549 687.5h1M549 668.5h1M549 649.5h1M549 631.5h1M549 612.5h1M549 594.5h1M549 575.5h1M549 557.5h1M549 538.5h1M549 520.5h1M549 501.5h1M549 483.5h1M549 464.5h1M549 445.5h1M549 427.5h1M549 408.5h1M549 390.5h1M549 371.5h1M549 353.5h1M549 334.5h1M549 316.5h1M549 297.5h1M549 279.5h1M549 260.5h1M549 242.5h1M549 223.5h1M549 204.5h1M549 186.5h1M549 167.5h1M549 149.5h1M549 130.5h1M549 112.5h1M568 928.5h1M568 909.5h1M568 872.5h1M568 853.5h1M568 835.5h1M568 798.5h1M568 779.5h1M568 761.5h1M568 724.5h1M568 705.5h1M568 687.5h1M568 649.5h1M568 631.5h1M568 612.5h1M568 575.5h1M568 557.5h1M568 538.5h1M568 501.5h1M568 483.5h1M568 464.5h1M568 427.5h1M568 408.5h1M568 390.5h1M568 353.5h1M568 334.5h1M568 316.5h1M568 279.5h1M568 260.5h1M568 242.5h1M568 204.5h1M568 186.5h1M568 167.5h1M568 130.5h1M568 112.5h1M587 928.5h1M587 909.5h1M587 890.5h1M587 872.5h1M587 853.5h1M587 835.5h1M587 816.5h1M587 798.5h1M587 779.5h1M587 761.5h1M587 742.5h1M587 724.5h1M587 705.5h1M587 687.5h1M587 668.5h1M587 649.5h1M587 631.5h1M587 612.5h1M587 594.5h1M587 575.5h1M587 557.5h1M587 538.5h1M587 520.5h1M587 501.5h1M587 483.5h1M587 464.5h1M587 445.5h1M587 427.5h1M587 408.5h1M587 390.5h1M587 371.5h1M587 353.5h1M587 334.5h1M587 316.5h1M587 297.5h1M587 279.5h1M587 260.5h1M587 242.5h1M587 223.5h1M587 204.5h1M587 186.5h1M587 167.5h1M587 149.5h1M587 130.5h1M587 112.5h1M605 928.5h1M605 909.5h1M605 890.5h1M605 872.5h1M605 853.5h1M605 835.5h1M605 816.5h1M605 798.5h1M605 779.5h1M605 761.5h1M605 742.5h1M605 724.5h1M605 705.5h1M605 687.5h1M605 668.5h1M605 649.5h1M605 631.5h1M605 612.5h1M605 594.5h1M605 575.5h1M605 557.5h1M605 538.5h1M605 520.5h1M605 501.5h1M605 483.5h1M605 464.5h1M605 445.5h1M605 427.5h1M605 408.5h1M605 390.5h1M605 371.5h1M605 353.5h1M605 334.5h1M605 316.5h1M605 297.5h1M605 279.5h1M605 260.5h1M605 242.5h1M605 223.5h1M605 204.5h1M605 186.5h1M605 167.5h1M605 149.5h1M605 130.5h1M605 112.5h1M624 928.5h1M624 909.5h1M624 890.5h1M624 872.5h1M624 853.5h1M624 835.5h1M624 816.5h1M624 798.5h1M624 779.5h1M624 761.5h1M624 742.5h1M624 724.5h1M624 705.5h1M624 687.5h1M624 668.5h1M624 649.5h1M624 631.5h1M624 612.5h1M624 594.5h1M624 575.5h1M624 557.5h1M624 538.5h1M624 520.5h1M624 501.5h1M624 483.5h1M624 464.5h1M624 445.5h1M624 427.5h1M624 408.5h1M624 390.5h1M624 371.5h1M624 353.5h1M624 334.5h1M624 316.5h1M624 297.5h1M624 279.5h1M624 260.5h1M624 242.5h1M624 223.5h1M624 204.5h1M624 186.5h1M624 167.5h1M624 149.5h1M624 130.5h1M624 112.5h1M642 928.5h1M642 909.5h1M642 872.5h1M642 853.5h1M642 835.5h1M642 798.5h1M642 779.5h1M642 761.5h1M642 724.5h1M642 705.5h1M642 687.5h1M642 649.5h1M642 631.5h1M642 612.5h1M642 575.5h1M642 557.5h1M642 538.5h1M642 501.5h1M642 483.5h1M642 464.5h1M642 427.5h1M642 408.5h1M642 390.5h1M642 353.5h1M642 334.5h1M642 316.5h1M642 279.5h1M642 260.5h1M642 242.5h1M642 204.5h1M642 186.5h1M642 167.5h1M642 130.5h1M642 112.5h1M661 928.5h1M661 909.5h1M661 890.5h1M661 872.5h1M661 853.5h1M661 835.5h1M661 816.5h1M661 798.5h1M661 779.5h1M661 761.5h1M661 742.5h1M661 724.5h1M661 705.5h1M661 687.5h1M661 668.5h1M661 649.5h1M661 631.5h1M661 612.5h1M661 594.5h1M661 575.5h1M661 557.5h1M661 538.5h1M661 520.5h1M661 501.5h1M661 483.5h1M661 464.5h1M661 445.5h1M661 427.5h1M661 408.5h1M661 390.5h1M661 371.5h1M661 353.5h1M661 334.5h1M661 316.5h1M661 297.5h1M661 279.5h1M661 260.5h1M661 242.5h1M661 223.5h1M661 204.5h1M661 186.5h1M661 167.5h1M661 149.5h1M661 130.5h1M661 112.5h1M679 928.5h1M679 909.5h1M679 890.5h1M679 872.5h1M679 853.5h1M679 835.5h1M679 816.5h1M679 798.5h1M679 779.5h1M679 761.5h1M679 742.5h1M679 724.5h1M679 705.5h1M679 687.5h1M679 668.5h1M679 649.5h1M679 631.5h1M679 612.5h1M679 594.5h1M679 575.5h1M679 557.5h1M679 538.5h1M679 520.5h1M679 501.5h1M679 483.5h1M679 464.5h1M679 445.5h1M679 427.5h1M679 408.5h1M679 390.5h1M679 371.5h1M679 353.5h1M679 334.5h1M679 316.5h1M679 297.5h1M679 279.5h1M679 260.5h1M679 242.5h1M679 223.5h1M679 204.5h1M679 186.5h1M679 167.5h1M679 149.5h1M679 130.5h1M679 112.5h1M698 928.5h1M698 909.5h1M698 890.5h1M698 872.5h1M698 853.5h1M698 835.5h1M698 816.5h1M698 798.5h1M698 779.5h1M698 761.5h1M698 742.5h1M698 724.5h1M698 705.5h1M698 687.5h1M698 668.5h1M698 649.5h1M698 631.5h1M698 612.5h1M698 594.5h1M698 575.5h1M698 557.5h1M698 538.5h1M698 520.5h1M698 501.5h1M698 483.5h1M698 464.5h1M698 445.5h1M698 427.5h1M698 408.5h1M698 390.5h1M698 371.5h1M698 353.5h1M698 334.5h1M698 316.5h1M698 297.5h1M698 279.5h1M698 260.5h1M698 242.5h1M698 223.5h1M698 204.5h1M698 186.5h1M698 167.5h1M698 149.5h1M698 130.5h1M698 112.5h1M716 928.5h1M716 909.5h1M716 872.5h1M716 853.5h1M716 835.5h1M716 798.5h1M716 779.5h1M716 761.5h1M716 724.5h1M716 705.5h1M716 687.5h1M716 649.5h1M716 631.5h1M716 612.5h1M716 575.5h1M716 557.5h1M716 538.5h1M716 501.5h1M716 483.5h1M716 464.5h1M716 427.5h1M716 408.5h1M716 390.5h1M716 353.5h1M716 334.5h1M716 316.5h1M716 279.5h1M716 260.5h1M716 242.5h1M716 204.5h1M716 186.5h1M716 167.5h1M716 130.5h1M716 112.5h1M735 928.5h1M735 909.5h1M735 890.5h1M735 872.5h1M735 853.5h1M735 835.5h1M735 816.5h1M735 798.5h1M735 779.5h1M735 761.5h1M735 742.5h1M735 724.5h1M735 705.5h1M735 687.5h1M735 668.5h1M735 649.5h1M735 631.5h1M735 612.5h1M735 594.5h1M735 575.5h1M735 557.5h1M735 538.5h1M735 520.5h1M735 501.5h1M735 483.5h1M735 464.5h1M735 445.5h1M735 427.5h1M735 408.5h1M735 390.5h1M735 371.5h1M735 353.5h1M735 334.5h1M735 316.5h1M735 297.5h1M735 279.5h1M735 260.5h1M735 242.5h1M735 223.5h1M735 204.5h1M735 186.5h1M735 167.5h1M735 149.5h1M735 130.5h1M735 112.5h1M753 928.5h1M753 909.5h1M753 890.5h1M753 872.5h1M753 853.5h1M753 835.5h1M753 816.5h1M753 798.5h1M753 779.5h1M753 761.5h1M753 742.5h1M753 724.5h1M753 705.5h1M753 687.5h1M753 668.5h1M753 649.5h1M753 631.5h1M753 612.5h1M753 594.5h1M753 575.5h1M753 557.5h1M753 538.5h1M753 520.5h1M753 501.5h1M753 483.5h1M753 464.5h1M753 445.5h1M753 427.5h1M753 408.5h1M753 390.5h1M753 371.5h1M753 353.5h1M753 334.5h1M753 316.5h1M753 297.5h1M753 279.5h1M753 260.5h1M753 242.5h1M753 223.5h1M753 204.5h1M753 186.5h1M753 167.5h1M753 149.5h1M753 130.5h1M753 112.5h1M772 928.5h1M772 909.5h1M772 890.5h1M772 872.5h1M772 853.5h1M772 835.5h1M772 816.5h1M772 798.5h1M772 779.5h1M772 761.5h1M772 742.5h1M772 724.5h1M772 705.5h1M772 687.5h1M772 668.5h1M772 649.5h1M772 631.5h1M772 612.5h1M772 594.5h1M772 575.5h1M772 557.5h1M772 538.5h1M772 520.5h1M772 501.5h1M772 483.5h1M772 464.5h1M772 445.5h1M772 427.5h1M772 408.5h1M772 390.5h1M772 371.5h1M772 353.5h1M772 334.5h1M772 316.5h1M772 297.5h1M772 279.5h1M772 260.5h1M772 242.5h1M772 223.5h1M772 204.5h1M772 186.5h1M772 167.5h1M772 149.5h1M772 130.5h1M772 112.5h1M791 928.5h1M791 909.5h1M791 872.5h1M791 853.5h1M791 835.5h1M791 798.5h1M791 779.5h1M791 761.5h1M791 724.5h1M791 705.5h1M791 687.5h1M791 649.5h1M791 631.5h1M791 612.5h1M791 575.5h1M791 557.5h1M791 538.5h1M791 501.5h1M791 483.5h1M791 464.5h1M791 427.5h1M791 408.5h1M791 390.5h1M791 353.5h1M791 334.5h1M791 316.5h1M791 279.5h1M791 260.5h1M791 242.5h1M791 204.5h1M791 186.5h1M791 167.5h1M791 130.5h1M791 112.5h1M809 928.5h1M809 909.5h1M809 890.5h1M809 872.5h1M809 853.5h1M809 835.5h1M809 816.5h1M809 798.5h1M809 779.5h1M809 761.5h1M809 742.5h1M809 724.5h1M809 705.5h1M809 687.5h1M809 668.5h1M809 649.5h1M809 631.5h1M809 612.5h1M809 594.5h1M809 575.5h1M809 557.5h1M809 538.5h1M809 520.5h1M809 501.5h1M809 483.5h1M809 464.5h1M809 445.5h1M809 427.5h1M809 408.5h1M809 390.5h1M809 371.5h1M809 353.5h1M809 334.5h1M809 316.5h1M809 297.5h1M809 279.5h1M809 260.5h1M809 242.5h1M809 223.5h1M809 204.5h1M809 186.5h1M809 167.5h1M809 149.5h1M809 130.5h1M809 112.5h1M828 928.5h1M828 909.5h1M828 890.5h1M828 872.5h1M828 853.5h1M828 835.5h1M828 816.5h1M828 798.5h1M828 779.5h1M828 761.5h1M828 742.5h1M828 724.5h1M828 705.5h1M828 687.5h1M828 668.5h1M828 649.5h1M828 631.5h1M828 612.5h1M828 594.5h1M828 575.5h1M828 557.5h1M828 538.5h1M828 520.5h1M828 501.5h1M828 483.5h1M828 464.5h1M828 445.5h1M828 427.5h1M828 408.5h1M828 390.5h1M828 371.5h1M828 353.5h1M828 334.5h1M828 316.5h1M828 297.5h1M828 279.5h1M828 260.5h1M828 242.5h1M828 223.5h1M828 204.5h1M828 186.5h1M828 167.5h1M828 149.5h1M828 130.5h1M828 112.5h1M846 928.5h1M846 909.5h1M846 890.5h1M846 872.5h1M846 853.5h1M846 835.5h1M846 816.5h1M846 798.5h1M846 779.5h1M846 761.5h1M846 742.5h1M846 724.5h1M846 705.5h1M846 687.5h1M846 668.5h1M846 649.5h1M846 631.5h1M846 612.5h1M846 594.5h1M846 575.5h1M846 557.5h1M846 538.5h1M846 520.5h1M846 501.5h1M846 483.5h1M846 464.5h1M846 445.5h1M846 427.5h1M846 408.5h1M846 390.5h1M846 371.5h1M846 353.5h1M846 334.5h1M846 316.5h1M846 297.5h1M846 279.5h1M846 260.5h1M846 242.5h1M846 223.5h1M846 204.5h1M846 186.5h1M846 167.5h1M846 149.5h1M846 130.5h1M846 112.5h1M865 928.5h1M865 909.5h1M865 872.5h1M865 853.5h1M865 835.5h1M865 798.5h1M865 779.5h1M865 761.5h1M865 724.5h1M865 705.5h1M865 687.5h1M865 649.5h1M865 631.5h1M865 612.5h1M865 575.5h1M865 557.5h1M865 538.5h1M865 501.5h1M865 483.5h1M865 464.5h1M865 427.5h1M865 408.5h1M865 390.5h1M865 353.5h1M865 334.5h1M865 316.5h1M865 279.5h1M865 260.5h1M865 242.5h1M865 204.5h1M865 186.5h1M865 167.5h1M865 130.5h1M865 112.5h1M883 928.5h1M883 909.5h1M883 890.5h1M883 872.5h1M883 853.5h1M883 835.5h1M883 816.5h1M883 798.5h1M883 779.5h1M883 761.5h1M883 742.5h1M883 724.5h1M883 705.5h1M883 687.5h1M883 668.5h1M883 649.5h1M883 631.5h1M883 612.5h1M883 594.5h1M883 575.5h1M883 557.5h1M883 538.5h1M883 520.5h1M883 501.5h1M883 483.5h1M883 464.5h1M883 445.5h1M883 427.5h1M883 408.5h1M883 390.5h1M883 371.5h1M883 353.5h1M883 334.5h1M883 316.5h1M883 297.5h1M883 279.5h1M883 260.5h1M883 242.5h1M883 223.5h1M883 204.5h1M883 186.5h1M883 167.5h1M883 149.5h1M883 130.5h1M883 112.5h1M902 928.5h1M902 909.5h1M902 890.5h1M902 872.5h1M902 853.5h1M902 835.5h1M902 816.5h1M902 798.5h1M902 779.5h1M902 761.5h1M902 742.5h1M902 724.5h1M902 705.5h1M902 687.5h1M902 668.5h1M902 649.5h1M902 631.5h1M902 612.5h1M902 594.5h1M902 575.5h1M902 557.5h1M902 538.5h1M902 520.5h1M902 501.5h1M902 483.5h1M902 464.5h1M902 445.5h1M902 427.5h1M902 408.5h1M902 390.5h1M902 371.5h1M902 353.5h1M902 334.5h1M902 316.5h1M902 297.5h1M902 279.5h1M902 260.5h1M902 242.5h1M902 223.5h1M902 204.5h1M902 186.5h1M902 167.5h1M902 149.5h1M902 130.5h1M902 112.5h1M920 928.5h1M920 909.5h1M920 890.5h1M920 872.5h1M920 853.5h1M920 835.5h1M920 816.5h1M920 798.5h1M920 779.5h1M920 761.5h1M920 742.5h1M920 724.5h1M920 705.5h1M920 687.5h1M920 668.5h1M920 649.5h1M920 631.5h1M920 612.5h1M920 594.5h1M920 575.5h1M920 557.5h1M920 538.5h1M920 520.5h1M920 501.5h1M920 483.5h1M920 464.5h1M920 445.5h1M920 427.5h1M920 408.5h1M920 390.5h1M920 371.5h1M920 353.5h1M920 334.5h1M920 316.5h1M920 297.5h1M920 279.5h1M920 260.5h1M920 242.5h1M920 223.5h1M920 204.5h1M920 186.5h1M920 167.5h1M920 149.5h1M920 130.5h1M920 112.5h1M939 928.5h1M939 909.5h1M939 872.5h1M939 853.5h1M939 835.5h1M939 798.5h1M939 779.5h1M939 761.5h1M939 724.5h1M939 705.5h1M939 687.5h1M939 649.5h1M939 631.5h1M939 612.5h1M939 575.5h1M939 557.5h1M939 538.5h1M939 501.5h1M939 483.5h1M939 464.5h1M939 427.5h1M939 408.5h1M939 390.5h1M939 353.5h1M939 334.5h1M939 316.5h1M939 279.5h1M939 260.5h1M939 242.5h1M939 204.5h1M939 186.5h1M939 167.5h1M939 130.5h1M939 112.5h1M957 928.5h1M957 909.5h1M957 890.5h1M957 872.5h1M957 853.5h1M957 835.5h1M957 816.5h1M957 798.5h1M957 779.5h1M957 761.5h1M957 742.5h1M957 724.5h1M957 705.5h1M957 687.5h1M957 668.5h1M957 649.5h1M957 631.5h1M957 612.5h1M957 594.5h1M957 575.5h1M957 557.5h1M957 538.5h1M957 520.5h1M957 501.5h1M957 483.5h1M957 464.5h1M957 445.5h1M957 427.5h1M957 408.5h1M957 390.5h1M957 371.5h1M957 353.5h1M957 334.5h1M957 316.5h1M957 297.5h1M957 279.5h1M957 260.5h1M957 242.5h1M957 223.5h1M957 204.5h1M957 186.5h1M957 167.5h1M957 149.5h1M957 130.5h1M957 112.5h1M976 928.5h1M976 909.5h1M976 890.5h1M976 872.5h1M976 853.5h1M976 835.5h1M976 816.5h1M976 798.5h1M976 779.5h1M976 761.5h1M976 742.5h1M976 724.5h1M976 705.5h1M976 687.5h1M976 668.5h1M976 649.5h1M976 631.5h1M976 612.5h1M976 594.5h1M976 575.5h1M976 557.5h1M976 538.5h1M976 520.5h1M976 501.5h1M976 483.5h1M976 464.5h1M976 445.5h1M976 427.5h1M976 408.5h1M976 390.5h1M976 371.5h1M976 353.5h1M976 334.5h1M976 316.5h1M976 297.5h1M976 279.5h1M976 260.5h1M976 242.5h1M976 223.5h1M976 204.5h1M976 186.5h1M976 167.5h1M976 149.5h1M976 130.5h1M976 112.5h1M994 928.5h1M994 909.5h1M994 890.5h1M994 872.5h1M994 853.5h1M994 835.5h1M994 816.5h1M994 798.5h1M994 779.5h1M994 761.5h1M994 742.5h1M994 724.5h1M994 705.5h1M994 687.5h1M994 668.5h1M994 649.5h1M994 631.5h1M994 612.5h1M994 594.5h1M994 575.5h1M994 557.5h1M994 538.5h1M994 520.5h1M994 501.5h1M994 483.5h1M994 464.5h1M994 445.5h1M994 427.5h1M994 408.5h1M994 390.5h1M994 371.5h1M994 353.5h1M994 334.5h1M994 316.5h1M994 297.5h1M994 279.5h1M994 260.5h1M994 242.5h1M994 223.5h1M994 204.5h1M994 186.5h1M994 167.5h1M994 149.5h1M994 130.5h1M994 112.5h1M1013 928.5h1M1013 909.5h1M1013 872.5h1M1013 853.5h1M1013 835.5h1M1013 798.5h1M1013 779.5h1M1013 761.5h1M1013 724.5h1M1013 705.5h1M1013 687.5h1M1013 649.5h1M1013 631.5h1M1013 612.5h1M1013 575.5h1M1013 557.5h1M1013 538.5h1M1013 501.5h1M1013 483.5h1M1013 464.5h1M1013 427.5h1M1013 408.5h1M1013 390.5h1M1013 353.5h1M1013 334.5h1M1013 316.5h1M1013 279.5h1M1013 260.5h1M1013 242.5h1M1013 204.5h1M1013 186.5h1M1013 167.5h1M1013 130.5h1M1013 112.5h1M1032 928.5h1M1032 909.5h1M1032 890.5h1M1032 872.5h1M1032 853.5h1M1032 835.5h1M1032 816.5h1M1032 798.5h1M1032 779.5h1M1032 761.5h1M1032 742.5h1M1032 724.5h1M1032 705.5h1M1032 687.5h1M1032 668.5h1M1032 649.5h1M1032 631.5h1M1032 612.5h1M1032 594.5h1M1032 575.5h1M1032 557.5h1M1032 538.5h1M1032 520.5h1M1032 501.5h1M1032 483.5h1M1032 464.5h1M1032 445.5h1M1032 427.5h1M1032 408.5h1M1032 390.5h1M1032 371.5h1M1032 353.5h1M1032 334.5h1M1032 316.5h1M1032 297.5h1M1032 279.5h1M1032 260.5h1M1032 242.5h1M1032 223.5h1M1032 204.5h1M1032 186.5h1M1032 167.5h1M1032 149.5h1M1032 130.5h1M1032 112.5h1M1050 928.5h1M1050 909.5h1M1050 890.5h1M1050 872.5h1M1050 853.5h1M1050 835.5h1M1050 816.5h1M1050 798.5h1M1050 779.5h1M1050 761.5h1M1050 742.5h1M1050 724.5h1M1050 705.5h1M1050 687.5h1M1050 668.5h1M1050 649.5h1M1050 631.5h1M1050 612.5h1M1050 594.5h1M1050 575.5h1M1050 557.5h1M1050 538.5h1M1050 520.5h1M1050 501.5h1M1050 483.5h1M1050 464.5h1M1050 445.5h1M1050 427.5h1M1050 408.5h1M1050 390.5h1M1050 371.5h1M1050 353.5h1M1050 334.5h1M1050 316.5h1M1050 297.5h1M1050 279.5h1M1050 260.5h1M1050 242.5h1M1050 223.5h1M1050 204.5h1M1050 186.5h1M1050 167.5h1M1050 149.5h1M1050 130.5h1M1050 112.5h1M1069 928.5h1M1069 909.5h1M1069 890.5h1M1069 872.5h1M1069 853.5h1M1069 835.5h1M1069 816.5h1M1069 798.5h1M1069 779.5h1M1069 761.5h1M1069 742.5h1M1069 724.5h1M1069 705.5h1M1069 687.5h1M1069 668.5h1M1069 649.5h1M1069 631.5h1M1069 612.5h1M1069 594.5h1M1069 575.5h1M1069 557.5h1M1069 538.5h1M1069 520.5h1M1069 501.5h1M1069 483.5h1M1069 464.5h1M1069 445.5h1M1069 427.5h1M1069 408.5h1M1069 390.5h1M1069 371.5h1M1069 353.5h1M1069 334.5h1M1069 316.5h1M1069 297.5h1M1069 279.5h1M1069 260.5h1M1069 242.5h1M1069 223.5h1M1069 204.5h1M1069 186.5h1M1069 167.5h1M1069 149.5h1M1069 130.5h1M1069 112.5h1M1087 928.5h1M1087 909.5h1M1087 872.5h1M1087 853.5h1M1087 835.5h1M1087 798.5h1M1087 779.5h1M1087 761.5h1M1087 724.5h1M1087 705.5h1M1087 687.5h1M1087 649.5h1M1087 631.5h1M1087 612.5h1M1087 575.5h1M1087 557.5h1M1087 538.5h1M1087 501.5h1M1087 483.5h1M1087 464.5h1M1087 427.5h1M1087 408.5h1M1087 390.5h1M1087 353.5h1M1087 334.5h1M1087 316.5h1M1087 279.5h1M1087 260.5h1M1087 242.5h1M1087 204.5h1M1087 186.5h1M1087 167.5h1M1087 130.5h1M1087 112.5h1M1106 928.5h1M1106 909.5h1M1106 890.5h1M1106 872.5h1M1106 853.5h1M1106 835.5h1M1106 816.5h1M1106 798.5h1M1106 779.5h1M1106 761.5h1M1106 742.5h1M1106 724.5h1M1106 705.5h1M1106 687.5h1M1106 668.5h1M1106 649.5h1M1106 631.5h1M1106 612.5h1M1106 594.5h1M1106 575.5h1M1106 557.5h1M1106 538.5h1M1106 520.5h1M1106 501.5h1M1106 483.5h1M1106 464.5h1M1106 445.5h1M1106 427.5h1M1106 408.5h1M1106 390.5h1M1106 371.5h1M1106 353.5h1M1106 334.5h1M1106 316.5h1M1106 297.5h1M1106 279.5h1M1106 260.5h1M1106 242.5h1M1106 223.5h1M1106 204.5h1M1106 186.5h1M1106 167.5h1M1106 149.5h1M1106 130.5h1M1106 112.5h1M1124 928.5h1M1124 909.5h1M1124 890.5h1M1124 872.5h1M1124 853.5h1M1124 835.5h1M1124 816.5h1M1124 798.5h1M1124 779.5h1M1124 761.5h1M1124 742.5h1M1124 724.5h1M1124 705.5h1M1124 687.5h1M1124 668.5h1M1124 649.5h1M1124 631.5h1M1124 612.5h1M1124 594.5h1M1124 575.5h1M1124 557.5h1M1124 538.5h1M1124 520.5h1M1124 501.5h1M1124 483.5h1M1124 464.5h1M1124 445.5h1M1124 427.5h1M1124 408.5h1M1124 390.5h1M1124 371.5h1M1124 353.5h1M1124 334.5h1M1124 316.5h1M1124 297.5h1M1124 279.5h1M1124 260.5h1M1124 242.5h1M1124 223.5h1M1124 204.5h1M1124 186.5h1M1124 167.5h1M1124 149.5h1M1124 130.5h1M1124 112.5h1M1143 928.5h1M1143 909.5h1M1143 890.5h1M1143 872.5h1M1143 853.5h1M1143 835.5h1M1143 816.5h1M1143 798.5h1M1143 779.5h1M1143 761.5h1M1143 742.5h1M1143 724.5h1M1143 705.5h1M1143 687.5h1M1143 668.5h1M1143 649.5h1M1143 631.5h1M1143 612.5h1M1143 594.5h1M1143 575.5h1M1143 557.5h1M1143 538.5h1M1143 520.5h1M1143 501.5h1M1143 483.5h1M1143 464.5h1M1143 445.5h1M1143 427.5h1M1143 408.5h1M1143 390.5h1M1143 371.5h1M1143 353.5h1M1143 334.5h1M1143 316.5h1M1143 297.5h1M1143 279.5h1M1143 260.5h1M1143 242.5h1M1143 223.5h1M1143 204.5h1M1143 186.5h1M1143 167.5h1M1143 149.5h1M1143 130.5h1M1143 112.5h1M1161 928.5h1M1161 909.5h1M1161 872.5h1M1161 853.5h1M1161 835.5h1M1161 798.5h1M1161 779.5h1M1161 761.5h1M1161 724.5h1M1161 705.5h1M1161 687.5h1M1161 649.5h1M1161 631.5h1M1161 612.5h1M1161 575.5h1M1161 557.5h1M1161 538.5h1M1161 501.5h1M1161 483.5h1M1161 464.5h1M1161 427.5h1M1161 408.5h1M1161 390.5h1M1161 353.5h1M1161 334.5h1M1161 316.5h1M1161 279.5h1M1161 260.5h1M1161 242.5h1M1161 204.5h1M1161 186.5h1M1161 167.5h1M1161 130.5h1M1161 112.5h1" stroke="#bdbdbd" stroke-width="1" fill="none" shape-rendering="crispEdges"/><path d="M121 890.5h5M123.5 888v5M121 816.5h5M123.5 814v5M121 742.5h5M123.5 740v5M121 668.5h5M123.5 666v5M121 594.5h5M123.5 592v5M121 520.5h5M123.5 518v5M121 445.5h5M123.5 443v5M121 371.5h5M123.5 369v5M121 297.5h5M123.5 295v5M121 223.5h5M123.5 221v5M121 149.5h5M123.5 147v5M195 890.5h5M197.5 888v5M195 816.5h5M197.5 814v5M195 742.5h5M197.5 740v5M195 668.5h5M197.5 666v5M195 594.5h5M197.5 592v5M195 520.5h5M197.5 518v5M195 445.5h5M197.5 443v5M195 371.5h5M197.5 369v5M195 297.5h5M197.5 295v5M195 223.5h5M197.5 221v5M195 149.5h5M197.5 147v5M269 890.5h5M271.5 888v5M269 816.5h5M271.5 814v5M269 742.5h5M271.5 740v5M269 668.5h5M271.5 666v5M269 594.5h5M271.5 592v5M269 520.5h5M271.5 518v5M269 445.5h5M271.5 443v5M269 371.5h5M271.5 369v5M269 297.5h5M271.5 295v5M269 223.5h5M271.5 221v5M269 149.5h5M271.5 147v5M344 890.5h5M346.5 888v5M344 816.5h5M346.5 814v5M344 742.5h5M346.5 740v5M344 668.5h5M346.5 666v5M344 594.5h5M346.5 592v5M344 520.5h5M346.5 518v5M344 445.5h5M346.5 443v5M344 371.5h5M346.5 369v5M344 297.5h5M346.5 295v5M344 223.5h5M346.5 221v5M344 149.5h5M346.5 147v5M418 890.5h5M420.5 888v5M418 816.5h5M420.5 814v5M418 742.5h5M420.5 740v5M418 668.5h5M420.5 666v5M418 594.5h5M420.5 592v5M418 520.5h5M420.5 518v5M418 445.5h5M420.5 443v5M418 371.5h5M420.5 369v5M418 297.5h5M420.5 295v5M418 223.5h5M420.5 221v5M418 149.5h5M420.5 147v5M492 890.5h5M494.5 888v5M492 816.5h5M494.5 814v5M492 742.5h5M494.5 740v5M492 668.5h5M494.5 666v5M492 594.5h5M494.5 592v5M492 520.5h5M494.5 518v5M492 445.5h5M494.5 443v5M492 371.5h5M494.5 369v5M492 297.5h5M494.5 295v5M492 223.5h5M494.5 221v5M492 149.5h5M494.5 147v5M566 890.5h5M568.5 888v5M566 816.5h5M568.5 814v5M566 742.5h5M568.5 740v5M566 668.5h5M568.5 666v5M566 594.5h5M568.5 592v5M566 520.5h5M568.5 518v5M566 445.5h5M568.5 443v5M566 371.5h5M568.5 369v5M566 297.5h5M568.5 295v5M566 223.5h5M568.5 221v5M566 149.5h5M568.5 147v5M640 890.5h5M642.5 888v5M640 816.5h5M642.5 814v5M640 742.5h5M642.5 740v5M640 668.5h5M642.5 666v5M640 594.5h5M642.5 592v5M640 520.5h5M642.5 518v5M640 445.5h5M642.5 443v5M640 371.5h5M642.5 369v5M640 297.5h5M642.5 295v5M640 223.5h5M642.5 221v5M640 149.5h5M642.5 147v5M714 890.5h5M716.5 888v5M714 816.5h5M716.5 814v5M714 742.5h5M716.5 740v5M714 668.5h5M716.5 666v5M714 594.5h5M716.5 592v5M714 520.5h5M716.5 518v5M714 445.5h5M716.5 443v5M714 371.5h5M716.5 369v5M714 297.5h5M716.5 295v5M714 223.5h5M716.5 221v5M714 149.5h5M716.5 147v5M789 890.5h5M791.5 888v5M789 816.5h5M791.5 814v5M789 742.5h5M791.5 740v5M789 668.5h5M791.5 666v5M789 594.5h5M791.5 592v5M789 520.5h5M791.5 518v5M789 445.5h5M791.5 443v5M789 371.5h5M791.5 369v5M789 297.5h5M791.5 295v5M789 223.5h5M791.5 221v5M789 149.5h5M791.5 147v5M863 890.5h5M865.5 888v5M863 816.5h5M865.5 814v5M863 742.5h5M865.5 740v5M863 668.5h5M865.5 666v5M863 594.5h5M865.5 592v5M863 520.5h5M865.5 518v5M863 445.5h5M865.5 443v5M863 371.5h5M865.5 369v5M863 297.5h5M865.5 295v5M863 223.5h5M865.5 221v5M863 149.5h5M865.5 147v5M937 890.5h5M939.5 888v5M937 816.5h5M939.5 814v5M937 742.5h5M939.5 740v5M937 668.5h5M939.5 666v5M937 594.5h5M939.5 592v5M937 520.5h5M939.5 518v5M937 445.5h5M939.5 443v5M937 371.5h5M939.5 369v5M937 297.5h5M939.5 295v5M937 223.5h5M939.5 221v5M937 149.5h5M939.5 147v5M1011 890.5h5M1013.5 888v5M1011 816.5h5M1013.5 814v5M1011 742.5h5M1013.5 740v5M1011 668.5h5M1013.5 666v5M1011 594.5h5M1013.5 592v5M1011 520.5h5M1013.5 518v5M1011 445.5h5M1013.5 443v5M1011 371.5h5M1013.5 369v5M1011 297.5h5M1013.5 295v5M1011 223.5h5M1013.5 221v5M1011 149.5h5M1013.5 147v5M1085 890.5h5M1087.5 888v5M1085 816.5h5M1087.5 814v5M1085 742.5h5M1087.5 740v5M1085 668.5h5M1087.5 666v5M1085 594.5h5M1087.5 592v5M1085 520.5h5M1087.5 518v5M1085 445.5h5M1087.5 443v5M1085 371.5h5M1087.5 369v5M1085 297.5h5M1087.5 295v5M1085 223.5h5M1087.5 221v5M1085 149.5h5M1087.5 147v5M1159 890.5h5M1161.5 888v5M1159 816.5h5M1161.5 814v5M1159 742.5h5M1161.5 740v5M1159 668.5h5M1161.5 666v5M1159 594.5h5M1161.5 592v5M1159 520.5h5M1161.5 518v5M1159 445.5h5M1161.5 443v5M1159 371.5h5M1161.5 369v5M1159 297.5h5M1161.5 295v5M1159 223.5h5M1161.5 221v5M1159 149.5h5M1161.5 147v5" stroke="#dcdcdc" stroke-width="1" fill="none" shape-rendering="crispEdges"/><path d="M509 446.7 L600 446.7" stroke="#2a62e6" stroke-width="13.6" fill="none" stroke-linecap="butt" stroke-linejoin="round"/>
<g><path d="M379.5 219.4 L379.5 300" stroke="#08bc08" stroke-width="15" fill="none" stroke-linecap="round" stroke-linejoin="round"/><path d="M416.6 219.4 L416.6 300" stroke="#08bc08" stroke-width="15" fill="none" stroke-linecap="round" stroke-linejoin="round"/><path d="M453.7 219.4 L453.7 300" stroke="#08bc08" stroke-width="15" fill="none" stroke-linecap="round" stroke-linejoin="round"/><path d="M490.7 219.4 L490.7 300" stroke="#08bc08" stroke-width="15" fill="none" stroke-linecap="round" stroke-linejoin="round"/><path d="M527.8 219.4 L527.8 300" stroke="#08bc08" stroke-width="15" fill="none" stroke-linecap="round" stroke-linejoin="round"/><path d="M564.9 219.4 L564.9 300" stroke="#08bc08" stroke-width="15" fill="none" stroke-linecap="round" stroke-linejoin="round"/><path d="M602 219.4 L602 300" stroke="#08bc08" stroke-width="15" fill="none" stroke-linecap="round" stroke-linejoin="round"/><path d="M639.2 219.4 L639.2 245 L656.2 262 L738.8 262 L781.4 219.4" stroke="#08bc08" stroke-width="14.7" fill="none" stroke-linecap="round" stroke-linejoin="round"/><path d="M675 262 L675 300" stroke="#08bc08" stroke-width="14.7" fill="none" stroke-linecap="round" stroke-linejoin="round"/><path d="M676.2 219.4 L707.4 188.2 L760 188.2" stroke="#08bc08" stroke-width="13" fill="none" stroke-linecap="round" stroke-linejoin="round"/><path d="M740 188.2 L851 188.2 L855.6 193 L855.6 256.6 L841.7 271 L841.7 330" stroke="#08bc08" stroke-width="11.4" fill="none" stroke-linecap="round" stroke-linejoin="round"/><path d="M819 219.4 L819 330" stroke="#08bc08" stroke-width="11.3" fill="none" stroke-linecap="round" stroke-linejoin="round"/><path d="M873.9 300.2 L911.2 300.2" stroke="#08bc08" stroke-width="29.5" fill="none" stroke-linecap="butt" stroke-linejoin="round"/><path d="M1033.3 300.2 L1071 300.2" stroke="#08bc08" stroke-width="29.5" fill="none" stroke-linecap="butt" stroke-linejoin="round"/><path d="M1040 301.2 L973.6 301.2 L930 344.8" stroke="#08bc08" stroke-width="23" fill="none" stroke-linecap="round" stroke-linejoin="round"/><path d="M340.6 300 L340.6 338 L357 354.5 L600 354.5" stroke="#08bc08" stroke-width="10.5" fill="none" stroke-linecap="round" stroke-linejoin="round"/><path d="M250 651.6 L236 651.6 L210.5 626 L210.5 461.5 L287 385 L529 385 L570 426" stroke="#08bc08" stroke-width="9.3" fill="none" stroke-linecap="round" stroke-linejoin="round"/><path d="M250 613 L225 588 L225 476.2 L291 410.2 L507 410.2 L526 429.2 L526 522.3" stroke="#08bc08" stroke-width="9.3" fill="none" stroke-linecap="round" stroke-linejoin="round"/><path d="M489 476 L256 476 L240 492 L240 557.8 L277 594.8" stroke="#08bc08" stroke-width="9.3" fill="none" stroke-linecap="round" stroke-linejoin="round"/><path d="M277 594.8 L277.2 672 L258 691 L250 691" stroke="#08bc08" stroke-width="11.5" fill="none" stroke-linecap="round" stroke-linejoin="round"/><path d="M489 447.2 L489 522.3" stroke="#08bc08" stroke-width="23" fill="none" stroke-linecap="round" stroke-linejoin="round"/><path d="M489 522.3 L489 600" stroke="#08bc08" stroke-width="30" fill="none" stroke-linecap="round" stroke-linejoin="round"/><path d="M388.2 600 L500 600 L541.4 641.4 L575 675" stroke="#08bc08" stroke-width="28.7" fill="none" stroke-linecap="round" stroke-linejoin="round"/><path d="M377.5 522.3 L377.5 545 L351.5 571 L351.5 615 L381 644.4 L430.5 644.4" stroke="#08bc08" stroke-width="29" fill="none" stroke-linecap="round" stroke-linejoin="round"/><path d="M314.9 599.7 L314.9 645 L351 681 L430.5 681" stroke="#08bc08" stroke-width="27.5" fill="none" stroke-linecap="round" stroke-linejoin="round"/><path d="M351.4 681 L351.4 748.2" stroke="#08bc08" stroke-width="19.5" fill="none" stroke-linecap="round" stroke-linejoin="round"/><path d="M388.5 748.2 L418.7 718.2 L455 718.2 L482.4 745.6 L482.4 785 L504.5 807 L528 807" stroke="#08bc08" stroke-width="29" fill="none" stroke-linecap="round" stroke-linejoin="round"/><path d="M430.5 755 L430.5 848" stroke="#08bc08" stroke-width="29" fill="none" stroke-linecap="round" stroke-linejoin="round"/><path d="M250 726 L368.6 844.6" stroke="#08bc08" stroke-width="33" fill="none" stroke-linecap="round" stroke-linejoin="round"/><path d="M372.2 848.2 L822 848.2 L871 799 L978.4 691.6" stroke="#08bc08" stroke-width="30" fill="none" stroke-linecap="round" stroke-linejoin="round"/><path d="M250 726 L272 748.2 L314.5 748.2" stroke="#08bc08" stroke-width="22" fill="none" stroke-linecap="round" stroke-linejoin="round"/><path d="M583.5 807 L583.5 848" stroke="#08bc08" stroke-width="30" fill="none" stroke-linecap="round" stroke-linejoin="round"/><path d="M583 757.4 L630 757.4" stroke="#08bc08" stroke-width="29.5" fill="none" stroke-linecap="round" stroke-linejoin="round"/><path d="M630 720.7 L630 848" stroke="#08bc08" stroke-width="29.3" fill="none" stroke-linecap="butt" stroke-linejoin="round"/><path d="M630 690 L681.6 690" stroke="#08bc08" stroke-width="16" fill="none" stroke-linecap="round" stroke-linejoin="round"/><path d="M681.6 640 L681.6 799" stroke="#08bc08" stroke-width="33" fill="none" stroke-linecap="round" stroke-linejoin="round"/><path d="M756.4 640 L756.4 799" stroke="#08bc08" stroke-width="33" fill="none" stroke-linecap="round" stroke-linejoin="round"/><path d="M945 799 L1052.2 691.8" stroke="#08bc08" stroke-width="30" fill="none" stroke-linecap="round" stroke-linejoin="round"/></g>
<g><rect x="364.6" y="204.7" width="29.5" height="29.5" fill="#5ae0fa"/><circle cx="379.4" cy="219.4" r="7.6" fill="#000"/><rect x="401.7" y="204.7" width="29.5" height="29.5" fill="#5ae0fa"/><circle cx="416.5" cy="219.4" r="7.6" fill="#000"/><rect x="438.8" y="204.7" width="29.5" height="29.5" fill="#5ae0fa"/><circle cx="453.6" cy="219.4" r="7.6" fill="#000"/><rect x="475.9" y="204.7" width="29.5" height="29.5" fill="#5ae0fa"/><circle cx="490.6" cy="219.4" r="7.6" fill="#000"/><rect x="513" y="204.7" width="29.5" height="29.5" fill="#5ae0fa"/><circle cx="527.7" cy="219.4" r="7.6" fill="#000"/><rect x="550" y="204.7" width="29.5" height="29.5" fill="#5ae0fa"/><circle cx="564.8" cy="219.4" r="7.6" fill="#000"/><rect x="587.1" y="204.7" width="29.5" height="29.5" fill="#5ae0fa"/><circle cx="601.9" cy="219.4" r="7.6" fill="#000"/><rect x="624.2" y="204.7" width="29.5" height="29.5" fill="#5ae0fa"/><circle cx="639" cy="219.4" r="7.6" fill="#000"/><rect x="661.3" y="204.7" width="29.5" height="29.5" fill="#5ae0fa"/><circle cx="676" cy="219.4" r="7.6" fill="#000"/><rect x="766.6" y="204.7" width="29.5" height="29.5" fill="#5ae0fa"/><circle cx="781.4" cy="219.4" r="7.6" fill="#000"/><rect x="803.7" y="204.7" width="29.5" height="29.5" fill="#5ae0fa"/><circle cx="818.5" cy="219.4" r="7.6" fill="#000"/><rect x="840.8" y="204.7" width="29.5" height="29.5" fill="#5ae0fa"/><circle cx="855.6" cy="219.4" r="7.6" fill="#000"/><rect x="251.8" y="285.4" width="29.5" height="29.5" fill="#5ae0fa"/><circle cx="266.5" cy="300.1" r="7.6" fill="#000"/><rect x="251.6" y="507.5" width="29.5" height="29.5" fill="#5ae0fa"/><circle cx="266.3" cy="522.3" r="7.6" fill="#000"/><rect x="288.8" y="285.4" width="29.5" height="29.5" fill="#5ae0fa"/><circle cx="303.6" cy="300.1" r="7.6" fill="#000"/><rect x="288.6" y="507.5" width="29.5" height="29.5" fill="#5ae0fa"/><circle cx="303.4" cy="522.3" r="7.6" fill="#000"/><rect x="325.9" y="285.4" width="29.5" height="29.5" fill="#5ae0fa"/><circle cx="340.7" cy="300.1" r="7.6" fill="#000"/><rect x="325.7" y="507.5" width="29.5" height="29.5" fill="#5ae0fa"/><circle cx="340.5" cy="522.3" r="7.6" fill="#000"/><rect x="363" y="285.4" width="29.5" height="29.5" fill="#5ae0fa"/><circle cx="377.7" cy="300.1" r="7.6" fill="#000"/><rect x="362.8" y="507.5" width="29.5" height="29.5" fill="#5ae0fa"/><circle cx="377.5" cy="522.3" r="7.6" fill="#000"/><rect x="400.1" y="285.4" width="29.5" height="29.5" fill="#5ae0fa"/><circle cx="414.8" cy="300.1" r="7.6" fill="#000"/><rect x="399.9" y="507.5" width="29.5" height="29.5" fill="#5ae0fa"/><circle cx="414.6" cy="522.3" r="7.6" fill="#000"/><rect x="437.1" y="285.4" width="29.5" height="29.5" fill="#5ae0fa"/><circle cx="451.9" cy="300.1" r="7.6" fill="#000"/><rect x="436.9" y="507.5" width="29.5" height="29.5" fill="#5ae0fa"/><circle cx="451.7" cy="522.3" r="7.6" fill="#000"/><rect x="474.2" y="285.4" width="29.5" height="29.5" fill="#5ae0fa"/><circle cx="489" cy="300.1" r="7.6" fill="#000"/><rect x="474" y="507.5" width="29.5" height="29.5" fill="#5ae0fa"/><circle cx="488.8" cy="522.3" r="7.6" fill="#000"/><rect x="511.3" y="285.4" width="29.5" height="29.5" fill="#5ae0fa"/><circle cx="526.1" cy="300.1" r="7.6" fill="#000"/><rect x="511.1" y="507.5" width="29.5" height="29.5" fill="#5ae0fa"/><circle cx="525.9" cy="522.3" r="7.6" fill="#000"/><rect x="548.4" y="285.4" width="29.5" height="29.5" fill="#5ae0fa"/><circle cx="563.1" cy="300.1" r="7.6" fill="#000"/><rect x="548.2" y="507.5" width="29.5" height="29.5" fill="#5ae0fa"/><circle cx="562.9" cy="522.3" r="7.6" fill="#000"/><rect x="585.5" y="285.4" width="29.5" height="29.5" fill="#5ae0fa"/><circle cx="600.2" cy="300.1" r="7.6" fill="#000"/><rect x="585.3" y="507.5" width="29.5" height="29.5" fill="#5ae0fa"/><circle cx="600" cy="522.3" r="7.6" fill="#000"/><rect x="622.5" y="285.4" width="29.5" height="29.5" fill="#5ae0fa"/><circle cx="637.3" cy="300.1" r="7.6" fill="#000"/><rect x="622.3" y="507.5" width="29.5" height="29.5" fill="#5ae0fa"/><circle cx="637.1" cy="522.3" r="7.6" fill="#000"/><rect x="659.6" y="285.4" width="29.5" height="29.5" fill="#5ae0fa"/><circle cx="674.4" cy="300.1" r="7.6" fill="#000"/><rect x="659.4" y="507.5" width="29.5" height="29.5" fill="#5ae0fa"/><circle cx="674.2" cy="522.3" r="7.6" fill="#000"/><rect x="696.7" y="285.4" width="29.5" height="29.5" fill="#5ae0fa"/><circle cx="711.5" cy="300.1" r="7.6" fill="#000"/><rect x="696.5" y="507.5" width="29.5" height="29.5" fill="#5ae0fa"/><circle cx="711.3" cy="522.3" r="7.6" fill="#000"/><rect x="733.8" y="285.4" width="29.5" height="29.5" fill="#5ae0fa"/><circle cx="748.5" cy="300.1" r="7.6" fill="#000"/><rect x="733.6" y="507.5" width="29.5" height="29.5" fill="#5ae0fa"/><circle cx="748.3" cy="522.3" r="7.6" fill="#000"/><rect x="770.9" y="285.4" width="29.5" height="29.5" fill="#5ae0fa"/><circle cx="785.6" cy="300.1" r="7.6" fill="#000"/><rect x="770.7" y="507.5" width="29.5" height="29.5" fill="#5ae0fa"/><circle cx="785.4" cy="522.3" r="7.6" fill="#000"/><rect x="859.1" y="285.4" width="29.5" height="29.5" fill="#5ae0fa"/><circle cx="873.9" cy="300.2" r="7.6" fill="#000"/><rect x="896.5" y="285.4" width="29.5" height="29.5" fill="#5ae0fa"/><circle cx="911.2" cy="300.2" r="7.6" fill="#000"/><rect x="1018.5" y="285.4" width="29.5" height="29.5" fill="#5ae0fa"/><circle cx="1033.3" cy="300.2" r="7.6" fill="#000"/><rect x="1056.2" y="285.4" width="29.5" height="29.5" fill="#5ae0fa"/><circle cx="1071" cy="300.2" r="7.6" fill="#000"/><rect x="474.2" y="432.4" width="29.5" height="29.5" fill="#5ae0fa"/><circle cx="489" cy="447.2" r="7.6" fill="#000"/><rect x="235.2" y="599.9" width="29.5" height="29.5" fill="#5ae0fa"/><circle cx="250" cy="614.6" r="7.6" fill="#000"/><rect x="235.2" y="636.9" width="29.5" height="29.5" fill="#5ae0fa"/><circle cx="250" cy="651.6" r="7.6" fill="#000"/><rect x="235.2" y="673.9" width="29.5" height="29.5" fill="#5ae0fa"/><circle cx="250" cy="688.6" r="7.6" fill="#000"/><rect x="235.2" y="710.9" width="29.5" height="29.5" fill="#5ae0fa"/><circle cx="250" cy="725.6" r="7.6" fill="#000"/><rect x="615.2" y="669" width="29.5" height="29.5" fill="#5ae0fa"/><circle cx="630" cy="683.7" r="7.6" fill="#000"/><rect x="615.2" y="706" width="29.5" height="29.5" fill="#5ae0fa"/><circle cx="630" cy="720.7" r="7.6" fill="#000"/><circle cx="314.9" cy="599.7" r="12.8" fill="#5ae0fa"/><circle cx="314.9" cy="599.7" r="5.2" fill="#000"/><circle cx="351.5" cy="599.7" r="12.8" fill="#5ae0fa"/><circle cx="351.5" cy="599.7" r="5.2" fill="#000"/><circle cx="388.2" cy="599.7" r="12.8" fill="#5ae0fa"/><circle cx="388.2" cy="599.7" r="5.2" fill="#000"/><circle cx="314.5" cy="748.2" r="12.8" fill="#5ae0fa"/><circle cx="314.5" cy="748.2" r="5.2" fill="#000"/><circle cx="351.4" cy="748.2" r="12.8" fill="#5ae0fa"/><circle cx="351.4" cy="748.2" r="5.2" fill="#000"/><circle cx="388.5" cy="748.2" r="12.8" fill="#5ae0fa"/><circle cx="388.5" cy="748.2" r="5.2" fill="#000"/><circle cx="583" cy="757.4" r="12.4" fill="#5ae0fa"/><circle cx="583" cy="757.4" r="5.5" fill="#000"/><circle cx="528" cy="807" r="18" fill="#5ae0fa"/><circle cx="528" cy="807" r="8.2" fill="#000"/><circle cx="583.5" cy="807" r="18" fill="#5ae0fa"/><circle cx="583.5" cy="807" r="8.2" fill="#000"/><circle cx="682" cy="799" r="27.7" fill="#5ae0fa"/><circle cx="682" cy="799" r="11" fill="#000"/><circle cx="756" cy="799" r="27.7" fill="#5ae0fa"/><circle cx="756" cy="799" r="11" fill="#000"/><circle cx="871" cy="799" r="27.7" fill="#5ae0fa"/><circle cx="871" cy="799" r="11" fill="#000"/><circle cx="945" cy="799" r="27.7" fill="#5ae0fa"/><circle cx="945" cy="799" r="11" fill="#000"/><circle cx="978.4" cy="688.7" r="16.3" fill="#50cdea"/><circle cx="978.4" cy="688.7" r="7.5" fill="#000"/><circle cx="1052.2" cy="688.7" r="16.3" fill="#50cdea"/><circle cx="1052.2" cy="688.7" r="7.5" fill="#000"/><rect x="421.2" y="635" width="18.6" height="18.6" fill="#5ae0fa"/><circle cx="430.5" cy="644.3" r="5.3" fill="#000"/><circle cx="430.5" cy="681" r="9.3" fill="#5ae0fa"/><circle cx="430.5" cy="681" r="5.6" fill="#000"/><circle cx="430.5" cy="718.2" r="9.3" fill="#5ae0fa"/><circle cx="430.5" cy="718.2" r="5.6" fill="#000"/><circle cx="430.5" cy="755" r="9.3" fill="#5ae0fa"/><circle cx="430.5" cy="755" r="5.6" fill="#000"/><circle cx="541.5" cy="644" r="7.7" fill="#000" stroke="#50cdea" stroke-width="3.3"/><circle cx="541.5" cy="681" r="7.7" fill="#000" stroke="#50cdea" stroke-width="3.3"/><circle cx="541.5" cy="718.4" r="7.7" fill="#000" stroke="#50cdea" stroke-width="3.3"/><circle cx="541.5" cy="755" r="7.7" fill="#000" stroke="#50cdea" stroke-width="3.3"/><circle cx="880.4" cy="682" r="28" fill="#000" stroke="#50cdea" stroke-width="10"/><circle cx="246.7" cy="222.2" r="27" fill="#000" stroke="#50cdea" stroke-width="4"/><circle cx="1053.6" cy="222.3" r="27" fill="#000" stroke="#50cdea" stroke-width="4"/><circle cx="247" cy="823.7" r="27" fill="#000" stroke="#50cdea" stroke-width="4"/><circle cx="1053.3" cy="824.2" r="27" fill="#000" stroke="#50cdea" stroke-width="4"/></g>
<g fill="none" stroke="#ff2028" opacity="0.9"><rect x="361.9" y="201.7" width="332.3" height="36.7" stroke-width="3"/><rect x="764" y="201.7" width="110.5" height="36.7" stroke-width="3"/><rect x="211" y="281.8" width="630.2" height="258.6" stroke-width="2.5"/><rect x="247.7" y="281.8" width="556.9" height="36.4" stroke-width="3"/><path d="M433.6 281.8 L433.6 318.2" stroke-width="3"/><rect x="247.7" y="503.6" width="556.9" height="36.8" stroke-width="2.6"/><path d="M433.2 503.6 L433.2 540.4" stroke-width="2.6"/><rect x="211" y="355" width="111.8" height="111.6" stroke-width="2.6"/><rect x="471" y="428.4" width="36.2" height="36.9" stroke-width="3.3"/><rect x="855.9" y="282.2" width="233.5" height="39.8" stroke-width="3.6"/><path d="M929.4 282 L929.4 322" stroke-width="3.4"/><path d="M1015.2 282 L1015.2 322" stroke-width="3.4"/><path d="M540.2 603.6 H415.3 V549.1 H700 M540.2 603.6 V590 H600" stroke-width="2.6"/><rect x="231.6" y="596.2" width="37.8" height="148.2" stroke-width="2.5"/><rect x="305.1" y="637.4" width="19.2" height="73.8" stroke-width="2.6"/><path d="M314.7 618.5 L314.7 637.4" stroke-width="2.6"/><path d="M314.7 711.2 L314.7 731" stroke-width="2.6"/><rect x="342.8" y="637.4" width="19.2" height="73.8" stroke-width="2.6"/><path d="M352.4 618.5 L352.4 637.4" stroke-width="2.6"/><path d="M352.4 711.2 L352.4 731" stroke-width="2.6"/><rect x="378.9" y="637.4" width="19.2" height="73.8" stroke-width="2.6"/><path d="M388.5 618.5 L388.5 637.4" stroke-width="2.6"/><path d="M388.5 711.2 L388.5 731" stroke-width="2.6"/><path d="M448.9 625.3 H469.2 A18 18 0 0 0 505.2 625.3 H524 V774.4 H448.9 Z" stroke-width="2.6"/><rect x="574.3" y="640" width="19.1" height="80.7" stroke-width="2.6"/><path d="M583.8 720.7 L583.8 738" stroke-width="2.6"/><rect x="611.5" y="650" width="37.1" height="89.2" stroke-width="2.5"/><rect x="693.7" y="630" width="125.5" height="118.2" stroke-width="2.6"/><rect x="819.2" y="630" width="98.6" height="117.6" stroke-width="2.6"/><circle cx="1015.8" cy="685.3" r="72.7" stroke-width="2.5"/><path d="M1036 730.5 H1052 M1044 722.5 V738.5" stroke-width="2.6"/><path d="M508 446.2 H540 Q545 446.4 549 450" stroke-width="2"/></g>
<g fill="#ff2028" stroke="#ff2028" stroke-width="0.5" opacity="0.92" font-family="Liberation Sans, sans-serif"><text x="379.4" y="190.6" font-size="13.2" textLength="15.5" lengthAdjust="spacingAndGlyphs" text-anchor="middle" stroke-width="0.5">D7</text><text x="416.5" y="190.6" font-size="13.2" textLength="15.5" lengthAdjust="spacingAndGlyphs" text-anchor="middle" stroke-width="0.5">D6</text><text x="453.6" y="190.6" font-size="13.2" textLength="15.5" lengthAdjust="spacingAndGlyphs" text-anchor="middle" stroke-width="0.5">D5</text><text x="490.6" y="190.6" font-size="13.2" textLength="15.5" lengthAdjust="spacingAndGlyphs" text-anchor="middle" stroke-width="0.5">D4</text><text x="527.7" y="190.6" font-size="13.2" textLength="15.5" lengthAdjust="spacingAndGlyphs" text-anchor="middle" stroke-width="0.5">RE</text><text x="564.8" y="190.6" font-size="13.2" textLength="15.5" lengthAdjust="spacingAndGlyphs" text-anchor="middle" stroke-width="0.5">RS</text><text x="601.9" y="190.6" font-size="13.2" textLength="15.5" lengthAdjust="spacingAndGlyphs" text-anchor="middle" stroke-width="0.5">V0</text><text x="639" y="190.6" font-size="13.2" textLength="24.5" lengthAdjust="spacingAndGlyphs" text-anchor="middle" stroke-width="0.5">GND</text><text x="676" y="190.6" font-size="13.2" textLength="24.5" lengthAdjust="spacingAndGlyphs" text-anchor="middle" stroke-width="0.5">+5V</text><text x="778.3" y="190.4" font-size="13.2" textLength="24.5" lengthAdjust="spacingAndGlyphs" text-anchor="middle" opacity="0.72" stroke-width="0.5">GND</text><text x="818.8" y="190.4" font-size="13.2" textLength="13.2" lengthAdjust="spacingAndGlyphs" text-anchor="middle" opacity="0.72" stroke-width="0.5">A7</text><text x="852.5" y="190.4" font-size="13.2" textLength="21.6" lengthAdjust="spacingAndGlyphs" text-anchor="middle" opacity="0.72" stroke-width="0.5">+5V</text><text x="481" y="264.3" font-size="23.5" textLength="89.5" lengthAdjust="spacingAndGlyphs" opacity="0.8" stroke-width="0.7">16X2 LCD</text><text x="775.9" y="262.2" font-size="23" textLength="79.7" lengthAdjust="spacingAndGlyphs" opacity="0.9" stroke-width="0.7">10K POT</text><text x="431" y="415.3" font-size="28.5" textLength="111.5" lengthAdjust="spacingAndGlyphs" stroke-width="0.9">ARDUINO</text><text x="420.7" y="569.6" font-size="21.3" textLength="144" lengthAdjust="spacingAndGlyphs" stroke-width="0.7">DIY HAKKO 907</text><text x="420.7" y="583.3" font-size="12.4" textLength="123" lengthAdjust="spacingAndGlyphs" stroke-width="0.45">DIGITAL SOLDERING</text><text x="420.7" y="597.2" font-size="12.4" textLength="109.6" lengthAdjust="spacingAndGlyphs" stroke-width="0.45">BY: TECHBUILDER</text><text x="314.7" y="578.6" font-size="12.5" textLength="15.5" lengthAdjust="spacingAndGlyphs" text-anchor="middle" stroke-width="0.5">R1</text><text x="351.5" y="578.6" font-size="12.5" textLength="15.5" lengthAdjust="spacingAndGlyphs" text-anchor="middle" opacity="0.75" stroke-width="0.5">R2</text><text x="388" y="578.6" font-size="12.5" textLength="15.5" lengthAdjust="spacingAndGlyphs" text-anchor="middle" opacity="0.85" stroke-width="0.5">R3</text><text x="455.6" y="705.2" font-size="18.5" textLength="52.8" lengthAdjust="spacingAndGlyphs" stroke-width="0.6">LM358</text><text x="496.5" y="852.6" font-size="29.3" textLength="106.8" lengthAdjust="spacingAndGlyphs" stroke-width="1">SENSOR</text><text x="662.8" y="852.6" font-size="29.3" textLength="104.6" lengthAdjust="spacingAndGlyphs" stroke-width="1">HEATER</text><text x="866" y="852.6" font-size="29.3" textLength="68.4" lengthAdjust="spacingAndGlyphs" stroke-width="1.1">- IN +</text><text x="210.4" y="621.4" font-size="23.6" textLength="87.4" lengthAdjust="spacingAndGlyphs" transform="rotate(90 210.4 621.4)" stroke-width="0.7">I2C-LCD</text><text x="275.6" y="601" font-size="13.6" textLength="23" lengthAdjust="spacingAndGlyphs" transform="rotate(90 275.6 601)" opacity="0.75" stroke-width="0.45">SDA</text><text x="275.6" y="639.2" font-size="13.6" textLength="18.7" lengthAdjust="spacingAndGlyphs" transform="rotate(90 275.6 639.2)" opacity="0.75" stroke-width="0.45">SCL</text><text x="275.6" y="677.4" font-size="13.6" textLength="21.2" lengthAdjust="spacingAndGlyphs" transform="rotate(90 275.6 677.4)" opacity="0.75" stroke-width="0.45">+5V</text><text x="275.6" y="711.4" font-size="13.6" textLength="24.6" lengthAdjust="spacingAndGlyphs" transform="rotate(90 275.6 711.4)" opacity="0.75" stroke-width="0.45">GND</text><text x="308.5" y="660" font-size="11.5" textLength="27" lengthAdjust="spacingAndGlyphs" transform="rotate(90 308.5 660)" opacity="0.9" stroke-width="0.4">2.7K</text><text x="346" y="660" font-size="11.5" textLength="27" lengthAdjust="spacingAndGlyphs" transform="rotate(90 346 660)" opacity="0.7" stroke-width="0.4">3.3K</text><text x="383.5" y="662" font-size="11.5" textLength="22" lengthAdjust="spacingAndGlyphs" transform="rotate(90 383.5 662)" opacity="0.8" stroke-width="0.4">470</text><text x="750.5" y="683" font-size="24.5" textLength="36" lengthAdjust="spacingAndGlyphs" transform="rotate(90 750.5 683)" opacity="0.8" stroke-width="0.8">44N</text><text x="577.5" y="690" font-size="12" textLength="8" lengthAdjust="spacingAndGlyphs" transform="rotate(90 577.5 690)" stroke-width="0.4">K</text></g>
<rect x="197.8" y="172.7" width="904.9" height="699.9" fill="none" stroke="#fff" stroke-width="3.2"/></g></svg>
<div id="dlg" style="position:absolute;left:547px;top:318.5px;width:584.6px;height:363px;background:#f0f0f0;border-radius:8px;box-shadow:0 0 0 1px rgba(100,100,100,0.55),0 8px 22px rgba(0,0,0,0.32),0 1px 5px rgba(0,0,0,0.25);overflow:hidden">
<div style="position:absolute;left:0.0px;top:0.0px;width:585.0px;height:30.5px;box-sizing:border-box;background:linear-gradient(#f5f5f9,#f1f1f2 70%,#f0f0f0)"></div>
<div style="position:absolute;top:5.6px;font-size:11.8px;line-height:15px;color:#000;white-space:nowrap;left:4.4px;transform:scaleX(0.9847);transform-origin:0 50%;">General settings</div>
<div style="position:absolute;top:3.3px;font-size:12.5px;line-height:16px;color:#000;white-space:nowrap;left:514.4px;transform:scaleX(0.7481);transform-origin:0 50%;">?</div>
<svg width="14" height="14" style="position:absolute;left:555.0px;top:4.1px" fill="none" stroke="#1a1a1a" stroke-width="1.05"><path d="M2.2 2.2 L11.8 11.8 M11.8 2.2 L2.2 11.8"/></svg>
<div style="position:absolute;left:10.0px;top:35.1px;width:126.9px;height:274.0px;box-sizing:border-box;background:#fff;border:1px solid #7a7a7a"></div>
<div style="position:absolute;left:28.3px;top:36.9px;width:85.3px;height:15.4px;box-sizing:border-box;background:#d9d9d9;border-radius:2px"></div>
<div style="position:absolute;top:36.1px;font-size:11.6px;line-height:15px;color:#000;white-space:nowrap;left:31.7px;transform:scaleX(0.9199);transform-origin:0 50%;">General settings</div>
<div style="position:absolute;left:22.0px;top:44.6px;width:7.5px;height:1.0px;box-sizing:border-box;background-image:linear-gradient(90deg,#8a8a8a 50%,transparent 50%);background-size:2px 1px"></div>
<div style="position:absolute;top:52.1px;font-size:11.6px;line-height:15px;color:#000;white-space:nowrap;left:31.7px;transform:scaleX(0.8831);transform-origin:0 50%;">Colors</div>
<div style="position:absolute;left:22.0px;top:60.6px;width:7.5px;height:1.0px;box-sizing:border-box;background-image:linear-gradient(90deg,#8a8a8a 50%,transparent 50%);background-size:2px 1px"></div>
<div style="position:absolute;top:68.1px;font-size:11.6px;line-height:15px;color:#000;white-space:nowrap;left:31.7px;transform:scaleX(0.9210);transform-origin:0 50%;">Working-Directories</div>
<div style="position:absolute;left:22.0px;top:76.6px;width:7.5px;height:1.0px;box-sizing:border-box;background-image:linear-gradient(90deg,#8a8a8a 50%,transparent 50%);background-size:2px 1px"></div>
<div style="position:absolute;top:84.1px;font-size:11.6px;line-height:15px;color:#000;white-space:nowrap;left:31.7px;transform:scaleX(0.9286);transform-origin:0 50%;">Macro-Directory</div>
<div style="position:absolute;left:22.0px;top:92.6px;width:7.5px;height:1.0px;box-sizing:border-box;background-image:linear-gradient(90deg,#8a8a8a 50%,transparent 50%);background-size:2px 1px"></div>
<div style="position:absolute;top:100.1px;font-size:11.6px;line-height:15px;color:#000;white-space:nowrap;left:31.7px;transform:scaleX(0.9210);transform-origin:0 50%;">Undo-Depth</div>
<div style="position:absolute;left:22.0px;top:108.6px;width:7.5px;height:1.0px;box-sizing:border-box;background-image:linear-gradient(90deg,#8a8a8a 50%,transparent 50%);background-size:2px 1px"></div>
<div style="position:absolute;top:116.1px;font-size:11.6px;line-height:15px;color:#000;white-space:nowrap;left:31.7px;transform:scaleX(0.9349);transform-origin:0 50%;">Imax</div>
<div style="position:absolute;left:22.0px;top:124.6px;width:7.5px;height:1.0px;box-sizing:border-box;background-image:linear-gradient(90deg,#8a8a8a 50%,transparent 50%);background-size:2px 1px"></div>
<div style="position:absolute;top:132.1px;font-size:11.6px;line-height:15px;color:#000;white-space:nowrap;left:31.7px;transform:scaleX(0.9236);transform-origin:0 50%;">Hotkeys</div>
<div style="position:absolute;left:22.0px;top:140.6px;width:7.5px;height:1.0px;box-sizing:border-box;background-image:linear-gradient(90deg,#8a8a8a 50%,transparent 50%);background-size:2px 1px"></div>
<div style="position:absolute;top:148.1px;font-size:11.6px;line-height:15px;color:#000;white-space:nowrap;left:31.7px;transform:scaleX(0.8926);transform-origin:0 50%;">Crosshair</div>
<div style="position:absolute;left:22.0px;top:156.6px;width:7.5px;height:1.0px;box-sizing:border-box;background-image:linear-gradient(90deg,#8a8a8a 50%,transparent 50%);background-size:2px 1px"></div>
<div style="position:absolute;top:164.1px;font-size:11.6px;line-height:15px;color:#000;white-space:nowrap;left:31.7px;transform:scaleX(0.9205);transform-origin:0 50%;">AutoSave</div>
<div style="position:absolute;left:22.0px;top:172.6px;width:7.5px;height:1.0px;box-sizing:border-box;background-image:linear-gradient(90deg,#8a8a8a 50%,transparent 50%);background-size:2px 1px"></div>
<div style="position:absolute;left:21.7px;top:44.5px;width:1.0px;height:128.5px;box-sizing:border-box;background-image:linear-gradient(#8a8a8a 50%,transparent 50%);background-size:1px 2px"></div>
<div style="position:absolute;left:147.7px;top:34.9px;width:427.3px;height:18.1px;box-sizing:border-box;background:#565656"></div>
<div style="position:absolute;top:36.7px;font-size:11.6px;line-height:15px;color:#fff;white-space:nowrap;font-weight:bold;left:152.3px;transform:scaleX(1.0177);transform-origin:0 50%;">General settings</div>
<div style="position:absolute;left:148.5px;top:61.5px;width:424.0px;height:245.6px;box-sizing:border-box;background:#f9f9f9;border:1px solid #ededed"></div>
<div style="position:absolute;top:71.0px;font-size:11.6px;line-height:15px;color:#000;white-space:nowrap;left:167.4px;transform:scaleX(0.9189);transform-origin:0 50%;">Base unit:</div>
<div style="position:absolute;top:71.0px;font-size:11.6px;line-height:15px;color:#000;white-space:nowrap;left:377.1px;transform:scaleX(0.8882);transform-origin:0 50%;">Drillings:</div>
<div style="position:absolute;left:241.6px;top:68.6px;width:110.2px;height:20.6px;box-sizing:border-box;background:#fff;border:1px solid #d2d2d2;border-bottom-color:#9a9a9a;border-radius:3px"></div>
<div style="position:absolute;top:71.0px;font-size:11.6px;line-height:15px;color:#000;white-space:nowrap;left:245.2px;transform:scaleX(0.8435);transform-origin:0 50%;">mm</div>
<svg width="10" height="6" style="position:absolute;left:338.8px;top:76.8px" fill="none" stroke="#444" stroke-width="1"><path d="M0.8 0.8 L4.8 4.8 L8.8 0.8"/></svg>
<div style="position:absolute;left:440.2px;top:68.6px;width:109.5px;height:20.6px;box-sizing:border-box;background:#fff;border:1px solid #d2d2d2;border-bottom-color:#9a9a9a;border-radius:3px"></div>
<div style="position:absolute;top:71.0px;font-size:11.6px;line-height:15px;color:#000;white-space:nowrap;left:443.1px;transform:scaleX(0.9040);transform-origin:0 50%;">Background color</div>
<svg width="10" height="6" style="position:absolute;left:536.4px;top:76.8px" fill="none" stroke="#444" stroke-width="1"><path d="M0.8 0.8 L4.8 4.8 L8.8 0.8"/></svg>
<div style="position:absolute;left:172.3px;top:103.3px;width:12.4px;height:12.4px;background:#0067c0;border-radius:3px"><svg width="13" height="13" style="position:absolute;left:-0.3px;top:-0.3px" fill="none" stroke="#fff" stroke-width="1.3"><path d="M3 6.8 L5.4 9.2 L10 4"/></svg></div>
<div style="position:absolute;top:101.0px;font-size:11.6px;line-height:15px;color:#000;white-space:nowrap;left:187.5px;transform:scaleX(0.8986);transform-origin:0 50%;">Show Board-Zoom</div>
<div style="position:absolute;left:172.3px;top:121.3px;width:12.4px;height:12.4px;background:#0067c0;border-radius:3px"><svg width="13" height="13" style="position:absolute;left:-0.3px;top:-0.3px" fill="none" stroke="#fff" stroke-width="1.3"><path d="M3 6.8 L5.4 9.2 L10 4"/></svg></div>
<div style="position:absolute;top:119.0px;font-size:11.6px;line-height:15px;color:#000;white-space:nowrap;left:187.5px;transform:scaleX(0.9222);transform-origin:0 50%;">Darken ground-plane</div>
<div style="position:absolute;left:172.3px;top:139.3px;width:12.4px;height:12.4px;background:#0067c0;border-radius:3px"><svg width="13" height="13" style="position:absolute;left:-0.3px;top:-0.3px" fill="none" stroke="#fff" stroke-width="1.3"><path d="M3 6.8 L5.4 9.2 L10 4"/></svg></div>
<div style="position:absolute;top:137.0px;font-size:11.6px;line-height:15px;color:#000;white-space:nowrap;left:187.5px;transform:scaleX(0.9220);transform-origin:0 50%;">Show ground-plane of all layers simultaneous</div>
<div style="position:absolute;left:172.3px;top:157.3px;width:12.4px;height:12.4px;box-sizing:border-box;background:#fbfbfb;border:1px solid #707070;border-radius:3px"></div>
<div style="position:absolute;top:155.0px;font-size:11.6px;line-height:15px;color:#000;white-space:nowrap;left:187.5px;transform:scaleX(0.9091);transform-origin:0 50%;">Consider connections (rubberbands) in TEST mode</div>
<div style="position:absolute;left:172.3px;top:175.3px;width:12.4px;height:12.4px;background:#0067c0;border-radius:3px"><svg width="13" height="13" style="position:absolute;left:-0.3px;top:-0.3px" fill="none" stroke="#fff" stroke-width="1.3"><path d="M3 6.8 L5.4 9.2 L10 4"/></svg></div>
<div style="position:absolute;top:173.0px;font-size:11.6px;line-height:15px;color:#000;white-space:nowrap;left:187.5px;transform:scaleX(0.8613);transform-origin:0 50%;">Blinking TEST mode</div>
<div style="position:absolute;left:172.3px;top:193.3px;width:12.4px;height:12.4px;background:#0067c0;border-radius:3px"><svg width="13" height="13" style="position:absolute;left:-0.3px;top:-0.3px" fill="none" stroke="#fff" stroke-width="1.3"><path d="M3 6.8 L5.4 9.2 L10 4"/></svg></div>
<div style="position:absolute;top:191.0px;font-size:11.6px;line-height:15px;color:#000;white-space:nowrap;left:187.5px;transform:scaleX(0.9176);transform-origin:0 50%;">Double-click takes size parameter of elements</div>
<div style="position:absolute;left:172.3px;top:211.3px;width:12.4px;height:12.4px;box-sizing:border-box;background:#fbfbfb;border:1px solid #707070;border-radius:3px"></div>
<div style="position:absolute;top:209.0px;font-size:11.6px;line-height:15px;color:#000;white-space:nowrap;left:187.5px;transform:scaleX(0.9403);transform-origin:0 50%;">Limit text height (track width min. 0.15 mm)</div>
<div style="position:absolute;left:172.3px;top:229.3px;width:12.4px;height:12.4px;background:#0067c0;border-radius:3px"><svg width="13" height="13" style="position:absolute;left:-0.3px;top:-0.3px" fill="none" stroke="#fff" stroke-width="1.3"><path d="M3 6.8 L5.4 9.2 L10 4"/></svg></div>
<div style="position:absolute;top:227.0px;font-size:11.6px;line-height:15px;color:#000;white-space:nowrap;left:187.5px;transform:scaleX(0.9439);transform-origin:0 50%;">Component ID and value always readable after rotating</div>
<div style="position:absolute;left:172.3px;top:247.3px;width:12.4px;height:12.4px;background:#0067c0;border-radius:3px"><svg width="13" height="13" style="position:absolute;left:-0.3px;top:-0.3px" fill="none" stroke="#fff" stroke-width="1.3"><path d="M3 6.8 L5.4 9.2 L10 4"/></svg></div>
<div style="position:absolute;top:245.0px;font-size:11.6px;line-height:15px;color:#000;white-space:nowrap;left:187.5px;transform:scaleX(0.9277);transform-origin:0 50%;">Optimize nodes of a track automatically</div>
<div style="position:absolute;left:172.3px;top:265.3px;width:12.4px;height:12.4px;box-sizing:border-box;background:#fbfbfb;border:1px solid #707070;border-radius:3px"></div>
<div style="position:absolute;top:263.0px;font-size:11.6px;line-height:15px;color:#000;white-space:nowrap;left:187.5px;transform:scaleX(0.9765);transform-origin:0 50%;">Origin top/left (instead of bottom/left)</div>
<div style="position:absolute;left:172.3px;top:283.3px;width:12.4px;height:12.4px;background:#0067c0;border-radius:3px"><svg width="13" height="13" style="position:absolute;left:-0.3px;top:-0.3px" fill="none" stroke="#fff" stroke-width="1.3"><path d="M3 6.8 L5.4 9.2 L10 4"/></svg></div>
<div style="position:absolute;top:281.0px;font-size:11.6px;line-height:15px;color:#000;white-space:nowrap;left:187.5px;transform:scaleX(0.9083);transform-origin:0 50%;">Use origin in CAM-export (Gerber/Excellon/HPGL)</div>
<div style="position:absolute;left:417.0px;top:327.5px;width:72.8px;height:22.7px;box-sizing:border-box;background:#fdfdfd;border:1px solid #0067c0;border-radius:4px"></div>
<div style="position:absolute;left:501.2px;top:327.5px;width:72.0px;height:22.7px;box-sizing:border-box;background:#fdfdfd;border:1px solid #d0d0d0;border-bottom-color:#b4b4b4;border-radius:4px"></div>
<div style="position:absolute;top:331.7px;font-size:11.6px;line-height:15px;color:#000;white-space:nowrap;left:445.4px;transform:scaleX(0.8592);transform-origin:0 50%;">OK</div>
<div style="position:absolute;top:331.7px;font-size:11.6px;line-height:15px;color:#000;white-space:nowrap;left:520.1px;transform:scaleX(0.8946);transform-origin:0 50%;">Cancel</div>
</div>
</div>
</body></html>
